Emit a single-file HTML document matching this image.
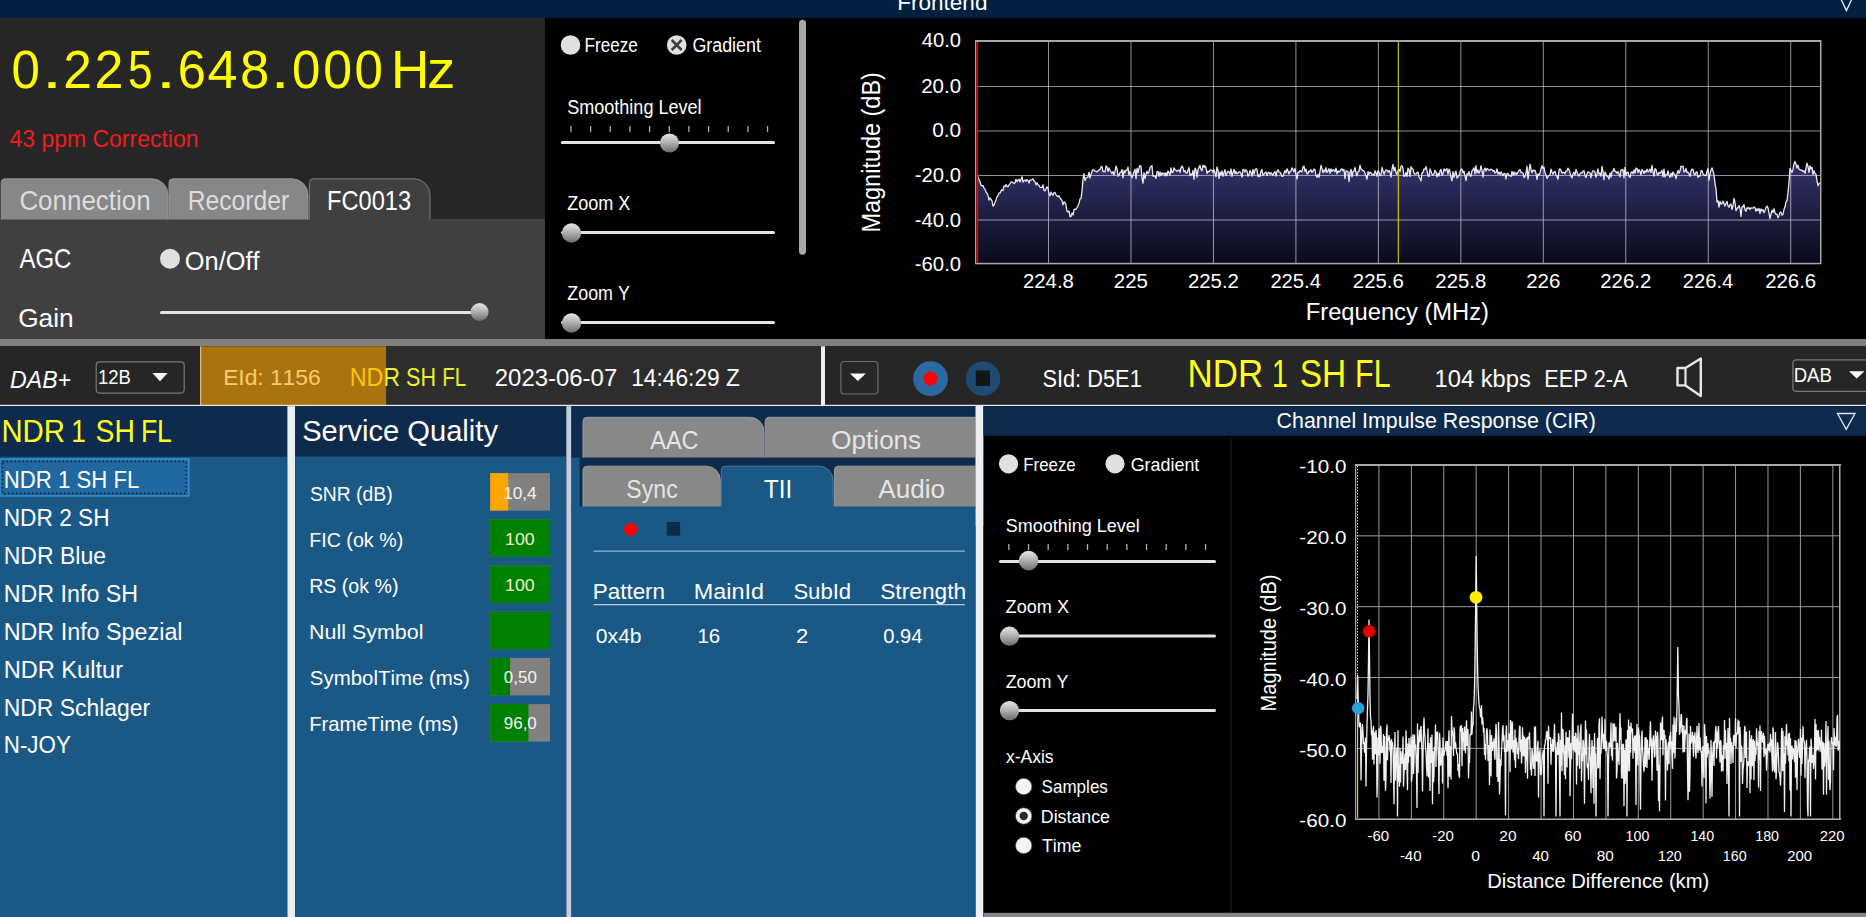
<!DOCTYPE html>
<html><head><meta charset="utf-8"><title>welle.io</title>
<style>
html,body{margin:0;padding:0;background:#000;overflow:hidden;width:1866px;height:917px}
svg{display:block;font-family:"Liberation Sans",sans-serif;font-kerning:none}
text{font-kerning:none}
</style></head><body>
<svg width="1866" height="917" viewBox="0 0 1866 917">
<defs>
<linearGradient id="thumbg" x1="0" y1="0" x2="0" y2="1">
  <stop offset="0" stop-color="#e6e6e6"/>
  <stop offset="0.45" stop-color="#b4b4b4"/>
  <stop offset="1" stop-color="#6c6c6c"/>
</linearGradient>
<linearGradient id="specg" x1="0" y1="160" x2="0" y2="264" gradientUnits="userSpaceOnUse">
  <stop offset="0" stop-color="#34346e"/>
  <stop offset="1" stop-color="#0a0a1a"/>
</linearGradient>
</defs>
<rect x="0.00" y="0.00" width="1866.00" height="18.00" fill="#02203f" />
<text x="897.15" y="10.00" font-size="22.82" textLength="90.31" lengthAdjust="spacingAndGlyphs" fill="#ffffff" >Frontend</text>
<path d="M1840,-3 L1852.8,-3 L1846.4,10.6 Z" fill="none" stroke="#d8e4f0" stroke-width="1.4" />
<rect x="0.00" y="18.00" width="545.00" height="321.00" fill="#262626" />
<text x="11.61" y="88.10" font-size="54.50" textLength="28.39" lengthAdjust="spacingAndGlyphs" fill="#ffff00" >0</text>
<text x="41.69" y="88.10" font-size="54.50" textLength="20.43" lengthAdjust="spacingAndGlyphs" fill="#ffff00" >.</text>
<text x="63.22" y="88.10" font-size="54.50" textLength="28.57" lengthAdjust="spacingAndGlyphs" fill="#ffff00" >2</text>
<text x="94.58" y="88.10" font-size="54.50" textLength="28.93" lengthAdjust="spacingAndGlyphs" fill="#ffff00" >2</text>
<text x="127.99" y="88.10" font-size="54.50" textLength="24.52" lengthAdjust="spacingAndGlyphs" fill="#ffff00" >5</text>
<text x="155.79" y="88.10" font-size="54.50" textLength="20.43" lengthAdjust="spacingAndGlyphs" fill="#ffff00" >.</text>
<text x="177.74" y="88.10" font-size="54.50" textLength="28.08" lengthAdjust="spacingAndGlyphs" fill="#ffff00" >6</text>
<text x="207.56" y="88.10" font-size="54.50" textLength="30.02" lengthAdjust="spacingAndGlyphs" fill="#ffff00" >4</text>
<text x="240.01" y="88.10" font-size="54.50" textLength="29.28" lengthAdjust="spacingAndGlyphs" fill="#ffff00" >8</text>
<text x="270.47" y="88.10" font-size="54.50" textLength="19.26" lengthAdjust="spacingAndGlyphs" fill="#ffff00" >.</text>
<text x="291.91" y="88.10" font-size="54.50" textLength="28.39" lengthAdjust="spacingAndGlyphs" fill="#ffff00" >0</text>
<text x="323.17" y="88.10" font-size="54.50" textLength="28.85" lengthAdjust="spacingAndGlyphs" fill="#ffff00" >0</text>
<text x="354.61" y="88.10" font-size="54.50" textLength="28.39" lengthAdjust="spacingAndGlyphs" fill="#ffff00" >0</text>
<text x="390.94" y="88.10" font-size="54.50" textLength="38.40" lengthAdjust="spacingAndGlyphs" fill="#ffff00" >H</text>
<text x="427.00" y="88.10" font-size="54.50" textLength="28.32" lengthAdjust="spacingAndGlyphs" fill="#ffff00" >z</text>
<text x="9.47" y="147.00" font-size="23.84" textLength="189.02" lengthAdjust="spacingAndGlyphs" fill="#f01c1c" >43 ppm Correction</text>
<rect x="0.00" y="219.00" width="545.00" height="120.00" fill="#404040" />
<path d="M1.2,219.5 L1.2,182.8 A4,4 0 0 1 5.2,178.8 L152,178.8 A16,16 0 0 1 168,194.8 L168,219.5 Z" fill="#878787" stroke="none" stroke-width="1" />
<path d="M1.2,219.5 L1.2,182.8 A4,4 0 0 1 5.2,178.8 L152,178.8 A16,16 0 0 1 168,194.8 L168,219.5" fill="none" stroke="#959595" stroke-width="1" />
<path d="M169,219.5 L169,182.8 A4,4 0 0 1 173,178.8 L292,178.8 A16,16 0 0 1 308,194.8 L308,219.5 Z" fill="#878787" stroke="none" stroke-width="1" />
<path d="M169,219.5 L169,182.8 A4,4 0 0 1 173,178.8 L292,178.8 A16,16 0 0 1 308,194.8 L308,219.5" fill="none" stroke="#959595" stroke-width="1" />
<path d="M309.4,219.5 L309.4,182.8 A4,4 0 0 1 313.4,178.8 L414,178.8 A16,16 0 0 1 430,194.8 L430,219.5 Z" fill="#404040" stroke="none" stroke-width="1" />
<path d="M309.4,219.5 L309.4,182.8 A4,4 0 0 1 313.4,178.8 L414,178.8 A16,16 0 0 1 430,194.8 L430,219.5" fill="none" stroke="#7c7c7c" stroke-width="1" />
<text x="19.38" y="210.00" font-size="27.03" textLength="131.30" lengthAdjust="spacingAndGlyphs" fill="#dcdcdc" >Connection</text>
<text x="187.78" y="210.00" font-size="27.03" textLength="101.43" lengthAdjust="spacingAndGlyphs" fill="#dcdcdc" >Recorder</text>
<text x="327.06" y="210.00" font-size="27.03" textLength="83.97" lengthAdjust="spacingAndGlyphs" fill="#ffffff" >FC0013</text>
<text x="19.45" y="268.00" font-size="26.89" textLength="51.96" lengthAdjust="spacingAndGlyphs" fill="#ffffff" >AGC</text>
<circle cx="170.00" cy="258.80" r="10.00" fill="#e0e0e0" />
<text x="184.80" y="270.00" font-size="25.44" textLength="74.77" lengthAdjust="spacingAndGlyphs" fill="#ffffff" >On/Off</text>
<text x="18.18" y="326.60" font-size="26.16" textLength="55.53" lengthAdjust="spacingAndGlyphs" fill="#ffffff" >Gain</text>
<rect x="160.00" y="311.00" width="312.00" height="3.00" fill="#e4e4e4" rx="1.5"/>
<circle cx="479.60" cy="312.00" r="9.00" fill="url(#thumbg)" />
<rect x="545.00" y="18.00" width="1321.00" height="321.00" fill="#000000" />
<circle cx="570.50" cy="45.00" r="9.80" fill="#e0e0e0" />
<text x="584.60" y="52.00" font-size="19.33" textLength="53.16" lengthAdjust="spacingAndGlyphs" fill="#ffffff" >Freeze</text>
<circle cx="676.70" cy="45.00" r="9.80" fill="#e0e0e0" />
<path d="M671.7,40 L681.7,50 M681.7,40 L671.7,50" fill="none" stroke="#404040" stroke-width="2.6" />
<text x="692.40" y="52.00" font-size="19.33" textLength="68.53" lengthAdjust="spacingAndGlyphs" fill="#ffffff" >Gradient</text>
<text x="567.18" y="114.30" font-size="19.77" textLength="134.43" lengthAdjust="spacingAndGlyphs" fill="#ffffff" >Smoothing Level</text>
<rect x="570.30" y="126.00" width="1.30" height="6.00" fill="#b0b0b0" />
<rect x="589.96" y="126.00" width="1.30" height="6.00" fill="#b0b0b0" />
<rect x="609.62" y="126.00" width="1.30" height="6.00" fill="#b0b0b0" />
<rect x="629.28" y="126.00" width="1.30" height="6.00" fill="#b0b0b0" />
<rect x="648.94" y="126.00" width="1.30" height="6.00" fill="#b0b0b0" />
<rect x="668.60" y="126.00" width="1.30" height="6.00" fill="#b0b0b0" />
<rect x="688.26" y="126.00" width="1.30" height="6.00" fill="#b0b0b0" />
<rect x="707.92" y="126.00" width="1.30" height="6.00" fill="#b0b0b0" />
<rect x="727.58" y="126.00" width="1.30" height="6.00" fill="#b0b0b0" />
<rect x="747.24" y="126.00" width="1.30" height="6.00" fill="#b0b0b0" />
<rect x="766.90" y="126.00" width="1.30" height="6.00" fill="#b0b0b0" />
<rect x="560.80" y="141.00" width="214.20" height="3.00" fill="#e4e4e4" rx="1.5"/>
<circle cx="669.50" cy="143.00" r="9.60" fill="url(#thumbg)" />
<text x="567.33" y="209.70" font-size="19.33" textLength="63.05" lengthAdjust="spacingAndGlyphs" fill="#ffffff" >Zoom X</text>
<rect x="561.00" y="231.00" width="214.00" height="3.00" fill="#e4e4e4" rx="1.5"/>
<circle cx="571.50" cy="233.00" r="9.70" fill="url(#thumbg)" />
<text x="567.33" y="299.70" font-size="19.33" textLength="62.46" lengthAdjust="spacingAndGlyphs" fill="#ffffff" >Zoom Y</text>
<rect x="561.00" y="321.00" width="214.00" height="3.00" fill="#e4e4e4" rx="1.5"/>
<circle cx="571.50" cy="323.00" r="9.70" fill="url(#thumbg)" />
<rect x="799.00" y="19.80" width="7.00" height="235.00" fill="#a8a8a8" rx="3.5"/>
<polygon points="977.0,263.3 977.0,175.9 978.0,176.7 979.0,179.6 980.0,181.9 981.0,185.0 982.0,186.0 983.0,185.5 984.0,188.1 985.0,189.2 986.0,191.9 987.0,193.4 988.0,195.3 989.0,200.0 990.0,197.9 991.0,199.3 992.0,200.9 993.0,206.1 994.0,205.3 995.0,202.4 996.0,199.9 997.0,196.8 998.0,195.5 999.0,193.0 1000.0,193.2 1001.0,191.0 1002.0,189.7 1003.0,190.5 1004.0,186.0 1005.0,186.3 1006.0,184.6 1007.0,186.6 1008.0,186.5 1009.0,185.1 1010.0,183.7 1011.0,182.0 1012.0,182.0 1013.0,182.8 1014.0,183.6 1015.0,182.7 1016.0,179.3 1017.0,181.7 1018.0,180.1 1019.0,179.2 1020.0,181.9 1021.0,179.6 1022.0,176.7 1023.0,182.1 1024.0,180.5 1025.0,180.0 1026.0,181.3 1027.0,179.6 1028.0,180.4 1029.0,183.1 1030.0,180.0 1031.0,179.9 1032.0,179.6 1033.0,178.9 1034.0,180.8 1035.0,181.8 1036.0,184.9 1037.0,182.7 1038.0,184.8 1039.0,185.4 1040.0,187.3 1041.0,187.6 1042.0,187.4 1043.0,184.8 1044.0,190.3 1045.0,190.8 1046.0,188.7 1047.0,186.8 1048.0,188.4 1049.0,193.4 1050.0,195.9 1051.0,192.2 1052.0,193.8 1053.0,195.3 1054.0,192.6 1055.0,192.4 1056.0,194.8 1057.0,196.0 1058.0,196.7 1059.0,195.7 1060.0,197.9 1061.0,199.3 1062.0,200.4 1063.0,204.9 1064.0,201.9 1065.0,202.6 1066.0,205.1 1067.0,211.3 1068.0,211.8 1069.0,210.9 1070.0,216.7 1071.0,216.6 1072.0,212.9 1073.0,215.1 1074.0,209.6 1075.0,209.2 1076.0,209.3 1077.0,207.5 1078.0,205.6 1079.0,203.4 1080.0,198.8 1081.0,198.6 1082.0,190.9 1083.0,179.4 1084.0,173.7 1085.0,180.7 1086.0,178.0 1087.0,177.5 1088.0,176.8 1089.0,172.2 1090.0,178.2 1091.0,174.2 1092.0,171.1 1093.0,169.5 1094.0,170.2 1095.0,171.2 1096.0,171.4 1097.0,171.9 1098.0,171.1 1099.0,170.0 1100.0,169.4 1101.0,166.9 1102.0,166.5 1103.0,171.8 1104.0,171.4 1105.0,172.0 1106.0,166.0 1107.0,166.9 1108.0,171.7 1109.0,167.9 1110.0,170.2 1111.0,172.0 1112.0,173.8 1113.0,171.5 1114.0,175.2 1115.0,171.3 1116.0,166.1 1117.0,168.5 1118.0,176.2 1119.0,175.3 1120.0,172.6 1121.0,172.2 1122.0,169.4 1123.0,177.8 1124.0,170.5 1125.0,172.7 1126.0,170.2 1127.0,170.1 1128.0,167.2 1129.0,175.0 1130.0,171.7 1131.0,175.1 1132.0,177.9 1133.0,174.7 1134.0,171.9 1135.0,169.1 1136.0,178.7 1137.0,168.4 1138.0,172.5 1139.0,168.0 1140.0,165.5 1141.0,166.5 1142.0,178.1 1143.0,183.2 1144.0,172.6 1145.0,178.7 1146.0,174.2 1147.0,171.2 1148.0,173.4 1149.0,171.7 1150.0,167.6 1151.0,166.3 1152.0,165.7 1153.0,176.1 1154.0,175.8 1155.0,176.2 1156.0,178.4 1157.0,171.7 1158.0,171.4 1159.0,176.4 1160.0,171.8 1161.0,175.5 1162.0,172.8 1163.0,174.0 1164.0,172.9 1165.0,175.8 1166.0,172.7 1167.0,175.7 1168.0,171.0 1169.0,172.7 1170.0,175.0 1171.0,167.9 1172.0,172.6 1173.0,172.1 1174.0,167.9 1175.0,169.9 1176.0,170.1 1177.0,171.3 1178.0,170.4 1179.0,170.0 1180.0,172.4 1181.0,167.9 1182.0,166.0 1183.0,167.6 1184.0,171.8 1185.0,170.8 1186.0,173.1 1187.0,173.0 1188.0,170.3 1189.0,167.6 1190.0,175.6 1191.0,174.0 1192.0,174.7 1193.0,170.4 1194.0,179.3 1195.0,168.1 1196.0,169.7 1197.0,177.2 1198.0,169.7 1199.0,167.3 1200.0,165.4 1201.0,169.6 1202.0,170.7 1203.0,165.1 1204.0,167.3 1205.0,165.7 1206.0,167.5 1207.0,173.5 1208.0,171.3 1209.0,171.8 1210.0,170.2 1211.0,170.0 1212.0,170.3 1213.0,172.4 1214.0,169.5 1215.0,173.2 1216.0,176.8 1217.0,166.9 1218.0,170.3 1219.0,178.4 1220.0,172.0 1221.0,175.0 1222.0,171.0 1223.0,176.2 1224.0,172.8 1225.0,169.6 1226.0,175.5 1227.0,173.1 1228.0,171.2 1229.0,171.8 1230.0,174.1 1231.0,168.9 1232.0,176.3 1233.0,172.6 1234.0,169.4 1235.0,173.5 1236.0,171.4 1237.0,173.9 1238.0,172.9 1239.0,172.1 1240.0,171.7 1241.0,173.8 1242.0,177.1 1243.0,169.3 1244.0,169.7 1245.0,172.1 1246.0,169.8 1247.0,171.4 1248.0,176.1 1249.0,174.7 1250.0,170.7 1251.0,172.3 1252.0,176.2 1253.0,169.4 1254.0,174.0 1255.0,169.9 1256.0,168.6 1257.0,169.3 1258.0,176.6 1259.0,174.7 1260.0,176.6 1261.0,170.9 1262.0,169.5 1263.0,175.3 1264.0,174.1 1265.0,172.5 1266.0,172.0 1267.0,175.6 1268.0,172.7 1269.0,172.2 1270.0,174.2 1271.0,172.6 1272.0,174.0 1273.0,175.3 1274.0,172.4 1275.0,171.5 1276.0,176.0 1277.0,171.3 1278.0,169.9 1279.0,171.9 1280.0,172.1 1281.0,174.1 1282.0,176.4 1283.0,176.2 1284.0,173.1 1285.0,170.6 1286.0,172.9 1287.0,168.8 1288.0,170.9 1289.0,174.0 1290.0,171.6 1291.0,170.9 1292.0,167.8 1293.0,169.6 1294.0,171.9 1295.0,168.4 1296.0,174.3 1297.0,179.2 1298.0,172.1 1299.0,172.5 1300.0,170.5 1301.0,171.5 1302.0,172.0 1303.0,166.9 1304.0,166.2 1305.0,171.5 1306.0,169.0 1307.0,173.8 1308.0,173.8 1309.0,171.0 1310.0,171.3 1311.0,169.7 1312.0,172.4 1313.0,171.0 1314.0,169.0 1315.0,169.8 1316.0,175.5 1317.0,177.2 1318.0,174.5 1319.0,177.3 1320.0,171.5 1321.0,165.3 1322.0,168.6 1323.0,172.7 1324.0,170.0 1325.0,171.9 1326.0,167.6 1327.0,172.5 1328.0,171.0 1329.0,168.8 1330.0,173.3 1331.0,169.0 1332.0,171.5 1333.0,169.6 1334.0,170.0 1335.0,171.8 1336.0,168.1 1337.0,173.9 1338.0,170.8 1339.0,172.3 1340.0,171.2 1341.0,169.3 1342.0,168.9 1343.0,170.9 1344.0,169.5 1345.0,178.6 1346.0,170.8 1347.0,171.0 1348.0,171.7 1349.0,181.5 1350.0,172.1 1351.0,169.3 1352.0,176.8 1353.0,171.6 1354.0,170.9 1355.0,167.3 1356.0,172.8 1357.0,175.9 1358.0,171.8 1359.0,171.3 1360.0,165.2 1361.0,169.1 1362.0,169.8 1363.0,170.7 1364.0,171.1 1365.0,173.5 1366.0,176.0 1367.0,179.2 1368.0,171.6 1369.0,174.2 1370.0,172.2 1371.0,172.8 1372.0,174.7 1373.0,174.1 1374.0,175.3 1375.0,170.8 1376.0,172.8 1377.0,176.3 1378.0,170.7 1379.0,172.1 1380.0,175.7 1381.0,174.9 1382.0,167.5 1383.0,171.0 1384.0,174.4 1385.0,171.7 1386.0,170.1 1387.0,170.1 1388.0,172.3 1389.0,170.5 1390.0,172.1 1391.0,177.2 1392.0,169.1 1393.0,164.5 1394.0,170.7 1395.0,167.3 1396.0,173.1 1397.0,174.4 1398.0,170.6 1399.0,169.4 1400.0,171.5 1401.0,166.5 1402.0,165.6 1403.0,168.4 1404.0,176.4 1405.0,175.9 1406.0,172.4 1407.0,176.4 1408.0,168.2 1409.0,169.4 1410.0,176.4 1411.0,166.7 1412.0,168.5 1413.0,169.2 1414.0,173.2 1415.0,174.1 1416.0,174.1 1417.0,172.6 1418.0,172.0 1419.0,177.0 1420.0,178.5 1421.0,180.9 1422.0,172.8 1423.0,172.3 1424.0,169.0 1425.0,169.3 1426.0,166.7 1427.0,170.5 1428.0,175.9 1429.0,176.4 1430.0,169.0 1431.0,171.5 1432.0,174.4 1433.0,175.2 1434.0,173.7 1435.0,170.2 1436.0,172.0 1437.0,176.9 1438.0,173.1 1439.0,176.0 1440.0,170.9 1441.0,169.4 1442.0,175.3 1443.0,173.9 1444.0,168.8 1445.0,170.8 1446.0,169.8 1447.0,168.8 1448.0,174.2 1449.0,169.1 1450.0,171.8 1451.0,177.4 1452.0,180.9 1453.0,171.6 1454.0,177.4 1455.0,173.7 1456.0,171.1 1457.0,178.1 1458.0,176.9 1459.0,175.4 1460.0,172.2 1461.0,169.1 1462.0,169.1 1463.0,172.8 1464.0,171.2 1465.0,175.6 1466.0,180.7 1467.0,173.8 1468.0,174.3 1469.0,171.6 1470.0,175.8 1471.0,176.0 1472.0,170.7 1473.0,169.6 1474.0,167.8 1475.0,174.0 1476.0,165.7 1477.0,172.9 1478.0,170.0 1479.0,173.2 1480.0,171.0 1481.0,165.6 1482.0,170.7 1483.0,177.2 1484.0,169.8 1485.0,168.0 1486.0,171.1 1487.0,168.5 1488.0,169.3 1489.0,170.2 1490.0,170.0 1491.0,169.1 1492.0,169.5 1493.0,171.3 1494.0,170.6 1495.0,173.0 1496.0,172.4 1497.0,168.9 1498.0,174.0 1499.0,172.2 1500.0,174.4 1501.0,171.9 1502.0,173.9 1503.0,175.6 1504.0,173.4 1505.0,173.6 1506.0,179.0 1507.0,173.7 1508.0,173.5 1509.0,175.7 1510.0,175.3 1511.0,176.5 1512.0,171.3 1513.0,175.2 1514.0,171.9 1515.0,174.5 1516.0,172.7 1517.0,174.3 1518.0,172.3 1519.0,170.2 1520.0,169.6 1521.0,172.7 1522.0,172.5 1523.0,173.0 1524.0,177.7 1525.0,176.4 1526.0,173.3 1527.0,166.3 1528.0,179.1 1529.0,170.8 1530.0,164.1 1531.0,169.2 1532.0,172.7 1533.0,169.9 1534.0,170.8 1535.0,170.2 1536.0,173.5 1537.0,179.4 1538.0,173.9 1539.0,175.4 1540.0,173.1 1541.0,168.8 1542.0,165.7 1543.0,168.5 1544.0,167.1 1545.0,173.2 1546.0,174.8 1547.0,178.4 1548.0,176.7 1549.0,175.4 1550.0,175.2 1551.0,169.1 1552.0,172.0 1553.0,174.1 1554.0,172.1 1555.0,171.4 1556.0,174.4 1557.0,176.7 1558.0,179.2 1559.0,170.6 1560.0,168.8 1561.0,170.5 1562.0,173.1 1563.0,172.4 1564.0,172.4 1565.0,173.8 1566.0,171.1 1567.0,171.0 1568.0,168.2 1569.0,169.6 1570.0,172.8 1571.0,176.5 1572.0,178.0 1573.0,173.7 1574.0,172.3 1575.0,175.0 1576.0,169.5 1577.0,172.2 1578.0,174.7 1579.0,176.0 1580.0,173.8 1581.0,172.7 1582.0,173.0 1583.0,171.4 1584.0,170.7 1585.0,175.7 1586.0,177.5 1587.0,173.8 1588.0,171.9 1589.0,172.5 1590.0,172.9 1591.0,177.5 1592.0,172.5 1593.0,170.8 1594.0,170.9 1595.0,172.2 1596.0,177.2 1597.0,173.9 1598.0,169.0 1599.0,174.2 1600.0,173.2 1601.0,176.2 1602.0,166.3 1603.0,171.6 1604.0,179.6 1605.0,172.0 1606.0,174.3 1607.0,176.1 1608.0,176.7 1609.0,179.1 1610.0,172.8 1611.0,177.1 1612.0,171.6 1613.0,171.4 1614.0,168.3 1615.0,171.3 1616.0,171.8 1617.0,173.4 1618.0,171.4 1619.0,173.9 1620.0,176.9 1621.0,169.8 1622.0,170.4 1623.0,169.5 1624.0,177.8 1625.0,167.4 1626.0,175.3 1627.0,172.6 1628.0,172.1 1629.0,176.3 1630.0,177.6 1631.0,172.5 1632.0,171.8 1633.0,173.8 1634.0,170.0 1635.0,173.1 1636.0,168.1 1637.0,168.3 1638.0,172.6 1639.0,169.6 1640.0,171.4 1641.0,175.1 1642.0,169.3 1643.0,171.1 1644.0,173.4 1645.0,170.8 1646.0,172.3 1647.0,169.1 1648.0,171.9 1649.0,171.1 1650.0,169.1 1651.0,172.5 1652.0,165.4 1653.0,172.3 1654.0,176.0 1655.0,168.7 1656.0,169.3 1657.0,174.0 1658.0,175.0 1659.0,172.2 1660.0,173.4 1661.0,172.2 1662.0,170.3 1663.0,176.8 1664.0,169.2 1665.0,177.0 1666.0,174.6 1667.0,174.6 1668.0,170.9 1669.0,175.0 1670.0,177.4 1671.0,173.1 1672.0,176.7 1673.0,171.9 1674.0,174.0 1675.0,174.7 1676.0,178.7 1677.0,173.9 1678.0,170.3 1679.0,173.2 1680.0,171.1 1681.0,166.2 1682.0,166.8 1683.0,166.2 1684.0,172.0 1685.0,171.2 1686.0,168.4 1687.0,172.5 1688.0,172.2 1689.0,173.9 1690.0,176.3 1691.0,170.9 1692.0,169.2 1693.0,169.4 1694.0,173.8 1695.0,174.9 1696.0,172.2 1697.0,172.0 1698.0,177.3 1699.0,175.8 1700.0,176.0 1701.0,170.9 1702.0,170.6 1703.0,173.9 1704.0,174.7 1705.0,175.4 1706.0,175.5 1707.0,171.5 1708.0,168.5 1709.0,180.1 1710.0,173.8 1711.0,170.2 1712.0,167.8 1713.0,171.0 1714.0,174.4 1715.0,183.6 1716.0,188.9 1717.0,202.0 1718.0,200.8 1719.0,207.1 1720.0,201.3 1721.0,204.1 1722.0,203.4 1723.0,201.1 1724.0,203.6 1725.0,206.0 1726.0,203.3 1727.0,201.4 1728.0,205.9 1729.0,207.2 1730.0,204.7 1731.0,204.0 1732.0,209.5 1733.0,205.6 1734.0,198.3 1735.0,202.4 1736.0,210.6 1737.0,208.8 1738.0,207.5 1739.0,205.5 1740.0,208.5 1741.0,216.4 1742.0,206.6 1743.0,207.0 1744.0,204.6 1745.0,209.7 1746.0,211.3 1747.0,207.7 1748.0,208.5 1749.0,207.6 1750.0,209.5 1751.0,207.9 1752.0,208.1 1753.0,208.2 1754.0,207.0 1755.0,207.7 1756.0,211.2 1757.0,208.7 1758.0,210.6 1759.0,208.4 1760.0,213.3 1761.0,208.9 1762.0,210.9 1763.0,209.8 1764.0,212.7 1765.0,210.4 1766.0,207.6 1767.0,206.1 1768.0,207.8 1769.0,213.2 1770.0,218.6 1771.0,214.0 1772.0,210.2 1773.0,212.5 1774.0,208.6 1775.0,212.9 1776.0,214.3 1777.0,214.2 1778.0,217.8 1779.0,215.7 1780.0,212.1 1781.0,212.1 1782.0,215.4 1783.0,214.3 1784.0,209.3 1785.0,207.1 1786.0,201.9 1787.0,200.5 1788.0,192.6 1789.0,182.0 1790.0,168.3 1791.0,170.7 1792.0,172.4 1793.0,169.4 1794.0,163.7 1795.0,161.5 1796.0,164.5 1797.0,168.1 1798.0,165.1 1799.0,169.4 1800.0,169.5 1801.0,170.3 1802.0,170.2 1803.0,171.5 1804.0,170.9 1805.0,173.3 1806.0,167.8 1807.0,163.2 1808.0,166.4 1809.0,172.3 1810.0,165.8 1811.0,169.0 1812.0,167.2 1813.0,174.3 1814.0,170.7 1815.0,173.4 1816.0,174.3 1817.0,180.9 1818.0,185.6 1819.0,183.6 1820.0,183.0 1820.0,263.3" fill="url(#specg)"/>
<line x1="975.50" y1="86.50" x2="1820.80" y2="86.50" stroke="rgba(200,200,215,0.72)" stroke-width="1" />
<line x1="975.50" y1="131.00" x2="1820.80" y2="131.00" stroke="rgba(200,200,215,0.72)" stroke-width="1" />
<line x1="975.50" y1="175.50" x2="1820.80" y2="175.50" stroke="rgba(200,200,215,0.72)" stroke-width="1" />
<line x1="975.50" y1="220.00" x2="1820.80" y2="220.00" stroke="rgba(200,200,215,0.72)" stroke-width="1" />
<line x1="1048.50" y1="41.00" x2="1048.50" y2="263.30" stroke="rgba(200,200,215,0.72)" stroke-width="1" />
<line x1="1130.97" y1="41.00" x2="1130.97" y2="263.30" stroke="rgba(200,200,215,0.72)" stroke-width="1" />
<line x1="1213.44" y1="41.00" x2="1213.44" y2="263.30" stroke="rgba(200,200,215,0.72)" stroke-width="1" />
<line x1="1295.91" y1="41.00" x2="1295.91" y2="263.30" stroke="rgba(200,200,215,0.72)" stroke-width="1" />
<line x1="1378.38" y1="41.00" x2="1378.38" y2="263.30" stroke="rgba(200,200,215,0.72)" stroke-width="1" />
<line x1="1460.85" y1="41.00" x2="1460.85" y2="263.30" stroke="rgba(200,200,215,0.72)" stroke-width="1" />
<line x1="1543.32" y1="41.00" x2="1543.32" y2="263.30" stroke="rgba(200,200,215,0.72)" stroke-width="1" />
<line x1="1625.79" y1="41.00" x2="1625.79" y2="263.30" stroke="rgba(200,200,215,0.72)" stroke-width="1" />
<line x1="1708.26" y1="41.00" x2="1708.26" y2="263.30" stroke="rgba(200,200,215,0.72)" stroke-width="1" />
<line x1="1790.73" y1="41.00" x2="1790.73" y2="263.30" stroke="rgba(200,200,215,0.72)" stroke-width="1" />
<polyline points="977.0,175.9 978.0,176.7 979.0,179.6 980.0,181.9 981.0,185.0 982.0,186.0 983.0,185.5 984.0,188.1 985.0,189.2 986.0,191.9 987.0,193.4 988.0,195.3 989.0,200.0 990.0,197.9 991.0,199.3 992.0,200.9 993.0,206.1 994.0,205.3 995.0,202.4 996.0,199.9 997.0,196.8 998.0,195.5 999.0,193.0 1000.0,193.2 1001.0,191.0 1002.0,189.7 1003.0,190.5 1004.0,186.0 1005.0,186.3 1006.0,184.6 1007.0,186.6 1008.0,186.5 1009.0,185.1 1010.0,183.7 1011.0,182.0 1012.0,182.0 1013.0,182.8 1014.0,183.6 1015.0,182.7 1016.0,179.3 1017.0,181.7 1018.0,180.1 1019.0,179.2 1020.0,181.9 1021.0,179.6 1022.0,176.7 1023.0,182.1 1024.0,180.5 1025.0,180.0 1026.0,181.3 1027.0,179.6 1028.0,180.4 1029.0,183.1 1030.0,180.0 1031.0,179.9 1032.0,179.6 1033.0,178.9 1034.0,180.8 1035.0,181.8 1036.0,184.9 1037.0,182.7 1038.0,184.8 1039.0,185.4 1040.0,187.3 1041.0,187.6 1042.0,187.4 1043.0,184.8 1044.0,190.3 1045.0,190.8 1046.0,188.7 1047.0,186.8 1048.0,188.4 1049.0,193.4 1050.0,195.9 1051.0,192.2 1052.0,193.8 1053.0,195.3 1054.0,192.6 1055.0,192.4 1056.0,194.8 1057.0,196.0 1058.0,196.7 1059.0,195.7 1060.0,197.9 1061.0,199.3 1062.0,200.4 1063.0,204.9 1064.0,201.9 1065.0,202.6 1066.0,205.1 1067.0,211.3 1068.0,211.8 1069.0,210.9 1070.0,216.7 1071.0,216.6 1072.0,212.9 1073.0,215.1 1074.0,209.6 1075.0,209.2 1076.0,209.3 1077.0,207.5 1078.0,205.6 1079.0,203.4 1080.0,198.8 1081.0,198.6 1082.0,190.9 1083.0,179.4 1084.0,173.7 1085.0,180.7 1086.0,178.0 1087.0,177.5 1088.0,176.8 1089.0,172.2 1090.0,178.2 1091.0,174.2 1092.0,171.1 1093.0,169.5 1094.0,170.2 1095.0,171.2 1096.0,171.4 1097.0,171.9 1098.0,171.1 1099.0,170.0 1100.0,169.4 1101.0,166.9 1102.0,166.5 1103.0,171.8 1104.0,171.4 1105.0,172.0 1106.0,166.0 1107.0,166.9 1108.0,171.7 1109.0,167.9 1110.0,170.2 1111.0,172.0 1112.0,173.8 1113.0,171.5 1114.0,175.2 1115.0,171.3 1116.0,166.1 1117.0,168.5 1118.0,176.2 1119.0,175.3 1120.0,172.6 1121.0,172.2 1122.0,169.4 1123.0,177.8 1124.0,170.5 1125.0,172.7 1126.0,170.2 1127.0,170.1 1128.0,167.2 1129.0,175.0 1130.0,171.7 1131.0,175.1 1132.0,177.9 1133.0,174.7 1134.0,171.9 1135.0,169.1 1136.0,178.7 1137.0,168.4 1138.0,172.5 1139.0,168.0 1140.0,165.5 1141.0,166.5 1142.0,178.1 1143.0,183.2 1144.0,172.6 1145.0,178.7 1146.0,174.2 1147.0,171.2 1148.0,173.4 1149.0,171.7 1150.0,167.6 1151.0,166.3 1152.0,165.7 1153.0,176.1 1154.0,175.8 1155.0,176.2 1156.0,178.4 1157.0,171.7 1158.0,171.4 1159.0,176.4 1160.0,171.8 1161.0,175.5 1162.0,172.8 1163.0,174.0 1164.0,172.9 1165.0,175.8 1166.0,172.7 1167.0,175.7 1168.0,171.0 1169.0,172.7 1170.0,175.0 1171.0,167.9 1172.0,172.6 1173.0,172.1 1174.0,167.9 1175.0,169.9 1176.0,170.1 1177.0,171.3 1178.0,170.4 1179.0,170.0 1180.0,172.4 1181.0,167.9 1182.0,166.0 1183.0,167.6 1184.0,171.8 1185.0,170.8 1186.0,173.1 1187.0,173.0 1188.0,170.3 1189.0,167.6 1190.0,175.6 1191.0,174.0 1192.0,174.7 1193.0,170.4 1194.0,179.3 1195.0,168.1 1196.0,169.7 1197.0,177.2 1198.0,169.7 1199.0,167.3 1200.0,165.4 1201.0,169.6 1202.0,170.7 1203.0,165.1 1204.0,167.3 1205.0,165.7 1206.0,167.5 1207.0,173.5 1208.0,171.3 1209.0,171.8 1210.0,170.2 1211.0,170.0 1212.0,170.3 1213.0,172.4 1214.0,169.5 1215.0,173.2 1216.0,176.8 1217.0,166.9 1218.0,170.3 1219.0,178.4 1220.0,172.0 1221.0,175.0 1222.0,171.0 1223.0,176.2 1224.0,172.8 1225.0,169.6 1226.0,175.5 1227.0,173.1 1228.0,171.2 1229.0,171.8 1230.0,174.1 1231.0,168.9 1232.0,176.3 1233.0,172.6 1234.0,169.4 1235.0,173.5 1236.0,171.4 1237.0,173.9 1238.0,172.9 1239.0,172.1 1240.0,171.7 1241.0,173.8 1242.0,177.1 1243.0,169.3 1244.0,169.7 1245.0,172.1 1246.0,169.8 1247.0,171.4 1248.0,176.1 1249.0,174.7 1250.0,170.7 1251.0,172.3 1252.0,176.2 1253.0,169.4 1254.0,174.0 1255.0,169.9 1256.0,168.6 1257.0,169.3 1258.0,176.6 1259.0,174.7 1260.0,176.6 1261.0,170.9 1262.0,169.5 1263.0,175.3 1264.0,174.1 1265.0,172.5 1266.0,172.0 1267.0,175.6 1268.0,172.7 1269.0,172.2 1270.0,174.2 1271.0,172.6 1272.0,174.0 1273.0,175.3 1274.0,172.4 1275.0,171.5 1276.0,176.0 1277.0,171.3 1278.0,169.9 1279.0,171.9 1280.0,172.1 1281.0,174.1 1282.0,176.4 1283.0,176.2 1284.0,173.1 1285.0,170.6 1286.0,172.9 1287.0,168.8 1288.0,170.9 1289.0,174.0 1290.0,171.6 1291.0,170.9 1292.0,167.8 1293.0,169.6 1294.0,171.9 1295.0,168.4 1296.0,174.3 1297.0,179.2 1298.0,172.1 1299.0,172.5 1300.0,170.5 1301.0,171.5 1302.0,172.0 1303.0,166.9 1304.0,166.2 1305.0,171.5 1306.0,169.0 1307.0,173.8 1308.0,173.8 1309.0,171.0 1310.0,171.3 1311.0,169.7 1312.0,172.4 1313.0,171.0 1314.0,169.0 1315.0,169.8 1316.0,175.5 1317.0,177.2 1318.0,174.5 1319.0,177.3 1320.0,171.5 1321.0,165.3 1322.0,168.6 1323.0,172.7 1324.0,170.0 1325.0,171.9 1326.0,167.6 1327.0,172.5 1328.0,171.0 1329.0,168.8 1330.0,173.3 1331.0,169.0 1332.0,171.5 1333.0,169.6 1334.0,170.0 1335.0,171.8 1336.0,168.1 1337.0,173.9 1338.0,170.8 1339.0,172.3 1340.0,171.2 1341.0,169.3 1342.0,168.9 1343.0,170.9 1344.0,169.5 1345.0,178.6 1346.0,170.8 1347.0,171.0 1348.0,171.7 1349.0,181.5 1350.0,172.1 1351.0,169.3 1352.0,176.8 1353.0,171.6 1354.0,170.9 1355.0,167.3 1356.0,172.8 1357.0,175.9 1358.0,171.8 1359.0,171.3 1360.0,165.2 1361.0,169.1 1362.0,169.8 1363.0,170.7 1364.0,171.1 1365.0,173.5 1366.0,176.0 1367.0,179.2 1368.0,171.6 1369.0,174.2 1370.0,172.2 1371.0,172.8 1372.0,174.7 1373.0,174.1 1374.0,175.3 1375.0,170.8 1376.0,172.8 1377.0,176.3 1378.0,170.7 1379.0,172.1 1380.0,175.7 1381.0,174.9 1382.0,167.5 1383.0,171.0 1384.0,174.4 1385.0,171.7 1386.0,170.1 1387.0,170.1 1388.0,172.3 1389.0,170.5 1390.0,172.1 1391.0,177.2 1392.0,169.1 1393.0,164.5 1394.0,170.7 1395.0,167.3 1396.0,173.1 1397.0,174.4 1398.0,170.6 1399.0,169.4 1400.0,171.5 1401.0,166.5 1402.0,165.6 1403.0,168.4 1404.0,176.4 1405.0,175.9 1406.0,172.4 1407.0,176.4 1408.0,168.2 1409.0,169.4 1410.0,176.4 1411.0,166.7 1412.0,168.5 1413.0,169.2 1414.0,173.2 1415.0,174.1 1416.0,174.1 1417.0,172.6 1418.0,172.0 1419.0,177.0 1420.0,178.5 1421.0,180.9 1422.0,172.8 1423.0,172.3 1424.0,169.0 1425.0,169.3 1426.0,166.7 1427.0,170.5 1428.0,175.9 1429.0,176.4 1430.0,169.0 1431.0,171.5 1432.0,174.4 1433.0,175.2 1434.0,173.7 1435.0,170.2 1436.0,172.0 1437.0,176.9 1438.0,173.1 1439.0,176.0 1440.0,170.9 1441.0,169.4 1442.0,175.3 1443.0,173.9 1444.0,168.8 1445.0,170.8 1446.0,169.8 1447.0,168.8 1448.0,174.2 1449.0,169.1 1450.0,171.8 1451.0,177.4 1452.0,180.9 1453.0,171.6 1454.0,177.4 1455.0,173.7 1456.0,171.1 1457.0,178.1 1458.0,176.9 1459.0,175.4 1460.0,172.2 1461.0,169.1 1462.0,169.1 1463.0,172.8 1464.0,171.2 1465.0,175.6 1466.0,180.7 1467.0,173.8 1468.0,174.3 1469.0,171.6 1470.0,175.8 1471.0,176.0 1472.0,170.7 1473.0,169.6 1474.0,167.8 1475.0,174.0 1476.0,165.7 1477.0,172.9 1478.0,170.0 1479.0,173.2 1480.0,171.0 1481.0,165.6 1482.0,170.7 1483.0,177.2 1484.0,169.8 1485.0,168.0 1486.0,171.1 1487.0,168.5 1488.0,169.3 1489.0,170.2 1490.0,170.0 1491.0,169.1 1492.0,169.5 1493.0,171.3 1494.0,170.6 1495.0,173.0 1496.0,172.4 1497.0,168.9 1498.0,174.0 1499.0,172.2 1500.0,174.4 1501.0,171.9 1502.0,173.9 1503.0,175.6 1504.0,173.4 1505.0,173.6 1506.0,179.0 1507.0,173.7 1508.0,173.5 1509.0,175.7 1510.0,175.3 1511.0,176.5 1512.0,171.3 1513.0,175.2 1514.0,171.9 1515.0,174.5 1516.0,172.7 1517.0,174.3 1518.0,172.3 1519.0,170.2 1520.0,169.6 1521.0,172.7 1522.0,172.5 1523.0,173.0 1524.0,177.7 1525.0,176.4 1526.0,173.3 1527.0,166.3 1528.0,179.1 1529.0,170.8 1530.0,164.1 1531.0,169.2 1532.0,172.7 1533.0,169.9 1534.0,170.8 1535.0,170.2 1536.0,173.5 1537.0,179.4 1538.0,173.9 1539.0,175.4 1540.0,173.1 1541.0,168.8 1542.0,165.7 1543.0,168.5 1544.0,167.1 1545.0,173.2 1546.0,174.8 1547.0,178.4 1548.0,176.7 1549.0,175.4 1550.0,175.2 1551.0,169.1 1552.0,172.0 1553.0,174.1 1554.0,172.1 1555.0,171.4 1556.0,174.4 1557.0,176.7 1558.0,179.2 1559.0,170.6 1560.0,168.8 1561.0,170.5 1562.0,173.1 1563.0,172.4 1564.0,172.4 1565.0,173.8 1566.0,171.1 1567.0,171.0 1568.0,168.2 1569.0,169.6 1570.0,172.8 1571.0,176.5 1572.0,178.0 1573.0,173.7 1574.0,172.3 1575.0,175.0 1576.0,169.5 1577.0,172.2 1578.0,174.7 1579.0,176.0 1580.0,173.8 1581.0,172.7 1582.0,173.0 1583.0,171.4 1584.0,170.7 1585.0,175.7 1586.0,177.5 1587.0,173.8 1588.0,171.9 1589.0,172.5 1590.0,172.9 1591.0,177.5 1592.0,172.5 1593.0,170.8 1594.0,170.9 1595.0,172.2 1596.0,177.2 1597.0,173.9 1598.0,169.0 1599.0,174.2 1600.0,173.2 1601.0,176.2 1602.0,166.3 1603.0,171.6 1604.0,179.6 1605.0,172.0 1606.0,174.3 1607.0,176.1 1608.0,176.7 1609.0,179.1 1610.0,172.8 1611.0,177.1 1612.0,171.6 1613.0,171.4 1614.0,168.3 1615.0,171.3 1616.0,171.8 1617.0,173.4 1618.0,171.4 1619.0,173.9 1620.0,176.9 1621.0,169.8 1622.0,170.4 1623.0,169.5 1624.0,177.8 1625.0,167.4 1626.0,175.3 1627.0,172.6 1628.0,172.1 1629.0,176.3 1630.0,177.6 1631.0,172.5 1632.0,171.8 1633.0,173.8 1634.0,170.0 1635.0,173.1 1636.0,168.1 1637.0,168.3 1638.0,172.6 1639.0,169.6 1640.0,171.4 1641.0,175.1 1642.0,169.3 1643.0,171.1 1644.0,173.4 1645.0,170.8 1646.0,172.3 1647.0,169.1 1648.0,171.9 1649.0,171.1 1650.0,169.1 1651.0,172.5 1652.0,165.4 1653.0,172.3 1654.0,176.0 1655.0,168.7 1656.0,169.3 1657.0,174.0 1658.0,175.0 1659.0,172.2 1660.0,173.4 1661.0,172.2 1662.0,170.3 1663.0,176.8 1664.0,169.2 1665.0,177.0 1666.0,174.6 1667.0,174.6 1668.0,170.9 1669.0,175.0 1670.0,177.4 1671.0,173.1 1672.0,176.7 1673.0,171.9 1674.0,174.0 1675.0,174.7 1676.0,178.7 1677.0,173.9 1678.0,170.3 1679.0,173.2 1680.0,171.1 1681.0,166.2 1682.0,166.8 1683.0,166.2 1684.0,172.0 1685.0,171.2 1686.0,168.4 1687.0,172.5 1688.0,172.2 1689.0,173.9 1690.0,176.3 1691.0,170.9 1692.0,169.2 1693.0,169.4 1694.0,173.8 1695.0,174.9 1696.0,172.2 1697.0,172.0 1698.0,177.3 1699.0,175.8 1700.0,176.0 1701.0,170.9 1702.0,170.6 1703.0,173.9 1704.0,174.7 1705.0,175.4 1706.0,175.5 1707.0,171.5 1708.0,168.5 1709.0,180.1 1710.0,173.8 1711.0,170.2 1712.0,167.8 1713.0,171.0 1714.0,174.4 1715.0,183.6 1716.0,188.9 1717.0,202.0 1718.0,200.8 1719.0,207.1 1720.0,201.3 1721.0,204.1 1722.0,203.4 1723.0,201.1 1724.0,203.6 1725.0,206.0 1726.0,203.3 1727.0,201.4 1728.0,205.9 1729.0,207.2 1730.0,204.7 1731.0,204.0 1732.0,209.5 1733.0,205.6 1734.0,198.3 1735.0,202.4 1736.0,210.6 1737.0,208.8 1738.0,207.5 1739.0,205.5 1740.0,208.5 1741.0,216.4 1742.0,206.6 1743.0,207.0 1744.0,204.6 1745.0,209.7 1746.0,211.3 1747.0,207.7 1748.0,208.5 1749.0,207.6 1750.0,209.5 1751.0,207.9 1752.0,208.1 1753.0,208.2 1754.0,207.0 1755.0,207.7 1756.0,211.2 1757.0,208.7 1758.0,210.6 1759.0,208.4 1760.0,213.3 1761.0,208.9 1762.0,210.9 1763.0,209.8 1764.0,212.7 1765.0,210.4 1766.0,207.6 1767.0,206.1 1768.0,207.8 1769.0,213.2 1770.0,218.6 1771.0,214.0 1772.0,210.2 1773.0,212.5 1774.0,208.6 1775.0,212.9 1776.0,214.3 1777.0,214.2 1778.0,217.8 1779.0,215.7 1780.0,212.1 1781.0,212.1 1782.0,215.4 1783.0,214.3 1784.0,209.3 1785.0,207.1 1786.0,201.9 1787.0,200.5 1788.0,192.6 1789.0,182.0 1790.0,168.3 1791.0,170.7 1792.0,172.4 1793.0,169.4 1794.0,163.7 1795.0,161.5 1796.0,164.5 1797.0,168.1 1798.0,165.1 1799.0,169.4 1800.0,169.5 1801.0,170.3 1802.0,170.2 1803.0,171.5 1804.0,170.9 1805.0,173.3 1806.0,167.8 1807.0,163.2 1808.0,166.4 1809.0,172.3 1810.0,165.8 1811.0,169.0 1812.0,167.2 1813.0,174.3 1814.0,170.7 1815.0,173.4 1816.0,174.3 1817.0,180.9 1818.0,185.6 1819.0,183.6 1820.0,183.0" fill="none" stroke="#e8e8f0" stroke-width="1.3" stroke-linejoin="round"/>
<rect x="975.00" y="40.00" width="846.00" height="2.00" fill="#a8a8a8" />
<rect x="1820.00" y="40.00" width="1.50" height="224.00" fill="#a8a8a8" />
<rect x="975.00" y="262.80" width="846.00" height="1.50" fill="#a8a8a8" />
<rect x="975.00" y="40.00" width="1.00" height="224.00" fill="#a8a8a8" />
<rect x="976.20" y="42.00" width="2.00" height="221.00" fill="#c01818" />
<line x1="1398.30" y1="42.00" x2="1398.30" y2="263.00" stroke="#e8e800" stroke-width="1" />
<text x="921.74" y="47.30" font-size="19.50" textLength="39.35" lengthAdjust="spacingAndGlyphs" fill="#ffffff" >40.0</text>
<text x="921.17" y="92.80" font-size="19.50" textLength="39.93" lengthAdjust="spacingAndGlyphs" fill="#ffffff" >20.0</text>
<text x="932.19" y="137.30" font-size="19.50" textLength="28.93" lengthAdjust="spacingAndGlyphs" fill="#ffffff" >0.0</text>
<text x="914.80" y="181.80" font-size="19.50" textLength="46.30" lengthAdjust="spacingAndGlyphs" fill="#ffffff" >-20.0</text>
<text x="914.80" y="226.80" font-size="19.50" textLength="46.30" lengthAdjust="spacingAndGlyphs" fill="#ffffff" >-40.0</text>
<text x="914.80" y="271.30" font-size="19.50" textLength="46.30" lengthAdjust="spacingAndGlyphs" fill="#ffffff" >-60.0</text>
<text x="1022.98" y="287.60" font-size="20.50" textLength="50.91" lengthAdjust="spacingAndGlyphs" fill="#ffffff" >224.8</text>
<text x="1113.84" y="287.60" font-size="20.50" textLength="34.09" lengthAdjust="spacingAndGlyphs" fill="#ffffff" >225</text>
<text x="1187.91" y="287.60" font-size="20.50" textLength="51.05" lengthAdjust="spacingAndGlyphs" fill="#ffffff" >225.2</text>
<text x="1270.39" y="287.60" font-size="20.50" textLength="50.61" lengthAdjust="spacingAndGlyphs" fill="#ffffff" >225.4</text>
<text x="1352.86" y="287.60" font-size="20.50" textLength="50.92" lengthAdjust="spacingAndGlyphs" fill="#ffffff" >225.6</text>
<text x="1435.33" y="287.60" font-size="20.50" textLength="50.91" lengthAdjust="spacingAndGlyphs" fill="#ffffff" >225.8</text>
<text x="1526.19" y="287.60" font-size="20.50" textLength="34.13" lengthAdjust="spacingAndGlyphs" fill="#ffffff" >226</text>
<text x="1600.26" y="287.60" font-size="20.50" textLength="51.05" lengthAdjust="spacingAndGlyphs" fill="#ffffff" >226.2</text>
<text x="1682.74" y="287.60" font-size="20.50" textLength="50.61" lengthAdjust="spacingAndGlyphs" fill="#ffffff" >226.4</text>
<text x="1765.21" y="287.60" font-size="20.50" textLength="50.92" lengthAdjust="spacingAndGlyphs" fill="#ffffff" >226.6</text>
<text x="1305.75" y="320.00" font-size="23.50" textLength="183.22" lengthAdjust="spacingAndGlyphs" fill="#ffffff" >Frequency (MHz)</text>
<g transform="translate(880,230.6) rotate(-90)">
<text x="-1.92" y="0.00" font-size="25.00" textLength="160.38" lengthAdjust="spacingAndGlyphs" fill="#ffffff" >Magnitude (dB)</text>
</g>
<rect x="0.00" y="339.00" width="1866.00" height="7.30" fill="#808080" />
<rect x="0.00" y="346.30" width="1866.00" height="58.70" fill="#262626" />
<rect x="825.00" y="346.30" width="1041.00" height="58.70" fill="#262626" />
<rect x="386.00" y="346.30" width="435.00" height="58.70" fill="#2d2d2d" />
<rect x="200.30" y="346.30" width="185.70" height="58.70" fill="#2a2a2a" />
<rect x="821.00" y="346.30" width="4.00" height="58.70" fill="#f0f0f0" />
<rect x="0.00" y="404.80" width="1866.00" height="1.40" fill="#e8e8e8" />
<text x="10.09" y="388.40" font-size="24.56" textLength="60.91" lengthAdjust="spacingAndGlyphs" fill="#ffffff" font-style="italic" >DAB+</text>
<rect x="96.20" y="361.90" width="88.00" height="31.20" fill="none" rx="3.5" stroke="#7a7a7a" stroke-width="1.2"/>
<text x="98.10" y="383.90" font-size="20.20" textLength="32.77" lengthAdjust="spacingAndGlyphs" fill="#ffffff" >12B</text>
<path d="M152.4,373 L167.7,373 L160,381.2 Z" fill="#ffffff" stroke="none" stroke-width="1" />
<text x="223.13" y="385.00" font-size="22.82" textLength="97.47" lengthAdjust="spacingAndGlyphs" fill="#ffffff" >EId: 1156</text>
<text x="349.69" y="386.10" font-size="25.29" textLength="50.39" lengthAdjust="spacingAndGlyphs" fill="#eef028" >NDR</text>
<text x="406.02" y="386.10" font-size="25.29" textLength="29.94" lengthAdjust="spacingAndGlyphs" fill="#eef028" >SH</text>
<text x="442.22" y="386.10" font-size="25.29" textLength="23.97" lengthAdjust="spacingAndGlyphs" fill="#eef028" >FL</text>
<rect x="200.30" y="346.30" width="185.80" height="58.70" fill="rgba(255,165,0,0.6)" />
<rect x="200.00" y="346.30" width="1.20" height="58.70" fill="rgba(255,230,180,0.7)" />
<text x="494.80" y="386.10" font-size="24.13" textLength="122.41" lengthAdjust="spacingAndGlyphs" fill="#ffffff" >2023-06-07</text>
<text x="631.17" y="386.10" font-size="24.13" textLength="108.74" lengthAdjust="spacingAndGlyphs" fill="#ffffff" >14:46:29 Z</text>
<rect x="840.90" y="361.50" width="37.00" height="32.50" fill="none" rx="3.5" stroke="#6e6e6e" stroke-width="1.2"/>
<path d="M850,373.6 L865.8,373.6 L857.9,380.9 Z" fill="#ffffff" stroke="none" stroke-width="1" />
<circle cx="930.50" cy="378.70" r="17.40" fill="#2b6aa0" />
<circle cx="930.30" cy="378.60" r="7.10" fill="#ff0000" />
<circle cx="983.10" cy="378.70" r="17.20" fill="#1f4a72" />
<rect x="975.80" y="370.50" width="14.20" height="15.30" fill="#151515" />
<text x="1042.41" y="386.80" font-size="24.42" textLength="99.35" lengthAdjust="spacingAndGlyphs" fill="#ffffff" >SId: D5E1</text>
<text x="1187.43" y="387.20" font-size="38.08" textLength="75.69" lengthAdjust="spacingAndGlyphs" fill="#ffff1e" >NDR</text>
<text x="1271.94" y="387.20" font-size="38.08" textLength="15.74" lengthAdjust="spacingAndGlyphs" fill="#ffff1e" >1</text>
<text x="1299.78" y="387.20" font-size="38.08" textLength="46.44" lengthAdjust="spacingAndGlyphs" fill="#ffff1e" >SH</text>
<text x="1355.11" y="387.20" font-size="38.08" textLength="35.40" lengthAdjust="spacingAndGlyphs" fill="#ffff1e" >FL</text>
<text x="1434.49" y="386.80" font-size="24.42" textLength="96.37" lengthAdjust="spacingAndGlyphs" fill="#ffffff" >104 kbps</text>
<text x="1544.22" y="386.80" font-size="24.42" textLength="83.32" lengthAdjust="spacingAndGlyphs" fill="#ffffff" >EEP 2-A</text>
<path d="M1677.5,368 L1685.5,368 L1700.8,358.6 L1700.8,396 L1685.5,385.4 L1677.5,385.4 Z" fill="none" stroke="#e8e8e8" stroke-width="2.4" stroke-linejoin="round"/>
<line x1="1685.50" y1="368.00" x2="1685.50" y2="385.40" stroke="#e8e8e8" stroke-width="2.2" />
<rect x="1792.90" y="359.80" width="90.00" height="31.50" fill="none" rx="3.5" stroke="#7a7a7a" stroke-width="1.2"/>
<text x="1793.67" y="382.00" font-size="19.77" textLength="38.31" lengthAdjust="spacingAndGlyphs" fill="#ffffff" >DAB</text>
<path d="M1849,371.3 L1864.5,371.3 L1856.7,378.5 Z" fill="#ffffff" stroke="none" stroke-width="1" />
<rect x="0.00" y="406.20" width="287.40" height="511.00" fill="#1a5886" />
<rect x="0.00" y="406.20" width="287.40" height="50.50" fill="#0e2a4c" />
<rect x="287.40" y="406.20" width="7.80" height="511.00" fill="#eceef2" />
<text x="1.39" y="441.50" font-size="31.98" textLength="63.67" lengthAdjust="spacingAndGlyphs" fill="#ffff1e" >NDR</text>
<text x="71.30" y="441.50" font-size="31.98" textLength="14.58" lengthAdjust="spacingAndGlyphs" fill="#ffff1e" >1</text>
<text x="95.62" y="441.50" font-size="31.98" textLength="39.29" lengthAdjust="spacingAndGlyphs" fill="#ffff1e" >SH</text>
<text x="140.92" y="441.50" font-size="31.98" textLength="30.96" lengthAdjust="spacingAndGlyphs" fill="#ffff1e" >FL</text>
<rect x="0.00" y="459.00" width="188.80" height="37.00" fill="#2068a0" stroke="#3a90d0" stroke-width="1.4"/>
<rect x="2.50" y="461.50" width="183.50" height="32.00" fill="none" stroke="#0a1a2a" stroke-width="1.3" stroke-dasharray="1.6,2.4"/>
<text x="3.78" y="488.10" font-size="23.98" textLength="135.66" lengthAdjust="spacingAndGlyphs" fill="#ffffff" >NDR 1 SH FL</text>
<text x="3.74" y="526.00" font-size="23.98" textLength="105.91" lengthAdjust="spacingAndGlyphs" fill="#ffffff" >NDR 2 SH</text>
<text x="3.71" y="563.90" font-size="23.98" textLength="102.31" lengthAdjust="spacingAndGlyphs" fill="#ffffff" >NDR Blue</text>
<text x="3.69" y="601.80" font-size="23.98" textLength="134.40" lengthAdjust="spacingAndGlyphs" fill="#ffffff" >NDR Info SH</text>
<text x="3.69" y="639.70" font-size="23.98" textLength="178.87" lengthAdjust="spacingAndGlyphs" fill="#ffffff" >NDR Info Spezial</text>
<text x="3.66" y="677.60" font-size="23.98" textLength="119.33" lengthAdjust="spacingAndGlyphs" fill="#ffffff" >NDR Kultur</text>
<text x="3.72" y="715.50" font-size="23.98" textLength="146.46" lengthAdjust="spacingAndGlyphs" fill="#ffffff" >NDR Schlager</text>
<text x="3.76" y="753.40" font-size="23.98" textLength="67.13" lengthAdjust="spacingAndGlyphs" fill="#ffffff" >N-JOY</text>
<rect x="295.20" y="406.20" width="271.00" height="511.00" fill="#1a5886" />
<rect x="295.20" y="406.20" width="271.00" height="50.30" fill="#0e2a4c" />
<rect x="566.30" y="406.20" width="5.20" height="511.00" fill="#c4cede" />
<text x="302.18" y="440.80" font-size="29.94" textLength="195.78" lengthAdjust="spacingAndGlyphs" fill="#ffffff" >Service Quality</text>
<rect x="490.20" y="473.10" width="59.80" height="37.50" fill="#808080" />
<rect x="490.20" y="473.10" width="18.00" height="37.50" fill="#ffa500" />
<text x="309.92" y="500.50" font-size="20.93" textLength="82.68" lengthAdjust="spacingAndGlyphs" fill="#ffffff" >SNR (dB)</text>
<text x="503.19" y="498.80" font-size="16.86" textLength="33.52" lengthAdjust="spacingAndGlyphs" fill="#f4f4f4" >10,4</text>
<rect x="490.20" y="519.30" width="59.80" height="37.50" fill="#808080" />
<rect x="490.20" y="519.30" width="60.00" height="37.50" fill="#008000" />
<text x="309.19" y="546.60" font-size="20.93" textLength="94.03" lengthAdjust="spacingAndGlyphs" fill="#ffffff" >FIC (ok %)</text>
<text x="505.05" y="544.70" font-size="16.86" textLength="29.65" lengthAdjust="spacingAndGlyphs" fill="#f4f4d0" >100</text>
<rect x="490.20" y="565.50" width="59.80" height="37.50" fill="#808080" />
<rect x="490.20" y="565.50" width="60.00" height="37.50" fill="#008000" />
<text x="309.19" y="592.70" font-size="20.93" textLength="89.22" lengthAdjust="spacingAndGlyphs" fill="#ffffff" >RS (ok %)</text>
<text x="505.05" y="590.80" font-size="16.86" textLength="29.65" lengthAdjust="spacingAndGlyphs" fill="#f4f4d0" >100</text>
<rect x="490.20" y="611.70" width="59.80" height="37.50" fill="#808080" />
<rect x="490.20" y="611.70" width="60.00" height="37.50" fill="#008000" />
<text x="309.04" y="638.80" font-size="20.93" textLength="114.39" lengthAdjust="spacingAndGlyphs" fill="#ffffff" >Null Symbol</text>
<rect x="490.20" y="657.90" width="59.80" height="37.50" fill="#808080" />
<rect x="490.20" y="657.90" width="19.90" height="37.50" fill="#008000" />
<text x="309.87" y="684.90" font-size="20.93" textLength="159.89" lengthAdjust="spacingAndGlyphs" fill="#ffffff" >SymbolTime (ms)</text>
<text x="503.84" y="683.20" font-size="16.86" textLength="33.03" lengthAdjust="spacingAndGlyphs" fill="#f4f4f4" >0,50</text>
<rect x="490.20" y="704.10" width="59.80" height="37.50" fill="#808080" />
<rect x="490.20" y="704.10" width="38.20" height="37.50" fill="#008000" />
<text x="309.14" y="731.00" font-size="20.93" textLength="149.31" lengthAdjust="spacingAndGlyphs" fill="#ffffff" >FrameTime (ms)</text>
<text x="503.70" y="729.30" font-size="16.86" textLength="33.16" lengthAdjust="spacingAndGlyphs" fill="#f4f4f4" >96,0</text>
<rect x="571.50" y="406.20" width="404.20" height="511.00" fill="#1a5886" />
<rect x="571.50" y="406.20" width="404.20" height="51.40" fill="#0e2a4c" />
<rect x="579.60" y="457.60" width="396.00" height="49.00" fill="#0e2a4c" />
<rect x="975.70" y="406.20" width="7.80" height="511.00" fill="#eceef2" />
<path d="M583,457.6 L583,421.3 A4,4 0 0 1 587,417.3 L749.9,417.3 A14,14 0 0 1 763.9,431.3 L763.9,457.6 Z" fill="#888888" stroke="none" stroke-width="1" />
<path d="M583,457.6 L583,421.3 A4,4 0 0 1 587,417.3 L749.9,417.3 A14,14 0 0 1 763.9,431.3 L763.9,457.6" fill="none" stroke="#9a9a9a" stroke-width="1" />
<path d="M765.2,457.6 L765.2,421.3 A4,4 0 0 1 769.2,417.3 L976,417.3 A14,14 0 0 1 990,431.3 L990,457.6 Z" fill="#888888" stroke="none" stroke-width="1" />
<path d="M765.2,457.6 L765.2,421.3 A4,4 0 0 1 769.2,417.3 L976,417.3 A14,14 0 0 1 990,431.3 L990,457.6" fill="none" stroke="#9a9a9a" stroke-width="1" />
<path d="M583,506.7 L583,470.2 A4,4 0 0 1 587,466.2 L706.3,466.2 A14,14 0 0 1 720.3,480.2 L720.3,506.7 Z" fill="#888888" stroke="none" stroke-width="1" />
<path d="M583,506.7 L583,470.2 A4,4 0 0 1 587,466.2 L706.3,466.2 A14,14 0 0 1 720.3,480.2 L720.3,506.7" fill="none" stroke="#9a9a9a" stroke-width="1" />
<path d="M834.4,506.7 L834.4,470.2 A4,4 0 0 1 838.4,466.2 L976,466.2 A14,14 0 0 1 990,480.2 L990,506.7 Z" fill="#888888" stroke="none" stroke-width="1" />
<path d="M834.4,506.7 L834.4,470.2 A4,4 0 0 1 838.4,466.2 L976,466.2 A14,14 0 0 1 990,480.2 L990,506.7" fill="none" stroke="#9a9a9a" stroke-width="1" />
<path d="M721.3,507.5 L721.3,470.2 A4,4 0 0 1 725.3,466.2 L819,466.2 A14,14 0 0 1 833,480.2 L833,507.5 Z" fill="#1a5886" stroke="none" stroke-width="1" />
<path d="M721.3,507.5 L721.3,470.2 A4,4 0 0 1 725.3,466.2 L819,466.2 A14,14 0 0 1 833,480.2 L833,507.5" fill="none" stroke="#4a7aa8" stroke-width="1" />
<rect x="571.50" y="506.70" width="404.20" height="2.00" fill="#1a5886" />
<rect x="721.80" y="500.00" width="110.70" height="8.00" fill="#1a5886" />
<rect x="975.70" y="406.20" width="7.80" height="120.00" fill="#eceef2" />
<text x="650.25" y="448.70" font-size="25.15" textLength="48.34" lengthAdjust="spacingAndGlyphs" fill="#e4e4e4" >AAC</text>
<text x="831.37" y="448.90" font-size="25.15" textLength="89.78" lengthAdjust="spacingAndGlyphs" fill="#e4e4e4" >Options</text>
<text x="626.35" y="497.50" font-size="25.15" textLength="51.36" lengthAdjust="spacingAndGlyphs" fill="#e4e4e4" >Sync</text>
<text x="764.06" y="498.00" font-size="25.15" textLength="28.06" lengthAdjust="spacingAndGlyphs" fill="#ffffff" >TII</text>
<text x="878.35" y="498.00" font-size="25.15" textLength="66.75" lengthAdjust="spacingAndGlyphs" fill="#e4e4e4" >Audio</text>
<circle cx="630.60" cy="529.30" r="6.60" fill="#ff0000" />
<rect x="666.80" y="522.00" width="13.30" height="13.70" fill="#0f2a48" />
<line x1="593.50" y1="551.10" x2="964.80" y2="551.10" stroke="#8fb4d6" stroke-width="1.3" />
<text x="592.76" y="598.70" font-size="22.53" textLength="72.30" lengthAdjust="spacingAndGlyphs" fill="#ffffff" >Pattern</text>
<text x="693.88" y="598.70" font-size="22.53" textLength="70.23" lengthAdjust="spacingAndGlyphs" fill="#ffffff" >MainId</text>
<text x="793.40" y="598.70" font-size="22.53" textLength="57.73" lengthAdjust="spacingAndGlyphs" fill="#ffffff" >SubId</text>
<text x="880.17" y="598.70" font-size="22.53" textLength="86.11" lengthAdjust="spacingAndGlyphs" fill="#ffffff" >Strength</text>
<line x1="593.50" y1="604.70" x2="964.80" y2="604.70" stroke="#b8c8d8" stroke-width="1.3" />
<text x="595.88" y="643.30" font-size="20.35" textLength="45.71" lengthAdjust="spacingAndGlyphs" fill="#ffffff" >0x4b</text>
<text x="697.44" y="643.30" font-size="20.35" textLength="22.76" lengthAdjust="spacingAndGlyphs" fill="#ffffff" >16</text>
<text x="796.10" y="643.30" font-size="20.35" textLength="12.21" lengthAdjust="spacingAndGlyphs" fill="#ffffff" >2</text>
<text x="883.21" y="643.30" font-size="20.35" textLength="39.28" lengthAdjust="spacingAndGlyphs" fill="#ffffff" >0.94</text>
<rect x="983.50" y="406.20" width="882.50" height="511.00" fill="#000000" />
<rect x="983.50" y="406.20" width="882.50" height="29.60" fill="#0e2a4c" />
<text x="1276.62" y="427.70" font-size="22.82" textLength="319.21" lengthAdjust="spacingAndGlyphs" fill="#ffffff" >Channel Impulse Response (CIR)</text>
<path d="M1837.5,413.5 L1855,413.5 L1846.2,429.4 Z" fill="none" stroke="#e0e8f0" stroke-width="1.3" />
<line x1="1231.00" y1="437.00" x2="1231.00" y2="913.00" stroke="#1c1c1c" stroke-width="1.2" />
<rect x="983.50" y="912.80" width="882.50" height="4.20" fill="#838383" />
<circle cx="1008.50" cy="463.80" r="9.60" fill="#e0e0e0" />
<text x="1023.32" y="470.90" font-size="18.17" textLength="52.33" lengthAdjust="spacingAndGlyphs" fill="#ffffff" >Freeze</text>
<circle cx="1115.00" cy="463.80" r="9.60" fill="#e0e0e0" />
<text x="1130.70" y="470.90" font-size="18.17" textLength="68.63" lengthAdjust="spacingAndGlyphs" fill="#ffffff" >Gradient</text>
<text x="1005.78" y="532.00" font-size="18.60" textLength="134.02" lengthAdjust="spacingAndGlyphs" fill="#ffffff" >Smoothing Level</text>
<rect x="1008.20" y="544.00" width="1.30" height="6.00" fill="#b0b0b0" />
<rect x="1027.87" y="544.00" width="1.30" height="6.00" fill="#b0b0b0" />
<rect x="1047.54" y="544.00" width="1.30" height="6.00" fill="#b0b0b0" />
<rect x="1067.21" y="544.00" width="1.30" height="6.00" fill="#b0b0b0" />
<rect x="1086.88" y="544.00" width="1.30" height="6.00" fill="#b0b0b0" />
<rect x="1106.55" y="544.00" width="1.30" height="6.00" fill="#b0b0b0" />
<rect x="1126.22" y="544.00" width="1.30" height="6.00" fill="#b0b0b0" />
<rect x="1145.89" y="544.00" width="1.30" height="6.00" fill="#b0b0b0" />
<rect x="1165.56" y="544.00" width="1.30" height="6.00" fill="#b0b0b0" />
<rect x="1185.23" y="544.00" width="1.30" height="6.00" fill="#b0b0b0" />
<rect x="1204.90" y="544.00" width="1.30" height="6.00" fill="#b0b0b0" />
<rect x="999.00" y="559.90" width="217.00" height="3.00" fill="#e4e4e4" rx="1.5"/>
<circle cx="1028.60" cy="560.60" r="9.80" fill="url(#thumbg)" />
<text x="1005.62" y="613.00" font-size="18.17" textLength="63.46" lengthAdjust="spacingAndGlyphs" fill="#ffffff" >Zoom X</text>
<rect x="1000.00" y="634.50" width="216.00" height="3.00" fill="#e4e4e4" rx="1.5"/>
<circle cx="1009.50" cy="636.20" r="9.60" fill="url(#thumbg)" />
<text x="1005.63" y="688.40" font-size="18.17" textLength="62.76" lengthAdjust="spacingAndGlyphs" fill="#ffffff" >Zoom Y</text>
<rect x="1000.00" y="709.00" width="216.00" height="3.00" fill="#e4e4e4" rx="1.5"/>
<circle cx="1009.50" cy="710.60" r="9.60" fill="url(#thumbg)" />
<text x="1006.00" y="762.70" font-size="18.17" textLength="47.53" lengthAdjust="spacingAndGlyphs" fill="#ffffff" >x-Axis</text>
<circle cx="1023.70" cy="786.50" r="8.30" fill="#f4f4f4" stroke="#3a3a3a" stroke-width="0.8"/>
<text x="1041.53" y="793.20" font-size="18.17" textLength="66.39" lengthAdjust="spacingAndGlyphs" fill="#ffffff" >Samples</text>
<circle cx="1023.70" cy="816.00" r="8.30" fill="#f4f4f4" stroke="#3a3a3a" stroke-width="0.8"/>
<circle cx="1023.70" cy="816.00" r="4.20" fill="#2a2a2a" />
<text x="1040.84" y="822.70" font-size="18.17" textLength="69.04" lengthAdjust="spacingAndGlyphs" fill="#ffffff" >Distance</text>
<circle cx="1023.70" cy="845.50" r="8.30" fill="#f4f4f4" stroke="#3a3a3a" stroke-width="0.8"/>
<text x="1041.90" y="852.20" font-size="18.17" textLength="39.49" lengthAdjust="spacingAndGlyphs" fill="#ffffff" >Time</text>
<line x1="1356.50" y1="535.84" x2="1840.00" y2="535.84" stroke="#9a9a9a" stroke-width="1" />
<line x1="1356.50" y1="606.68" x2="1840.00" y2="606.68" stroke="#9a9a9a" stroke-width="1" />
<line x1="1356.50" y1="677.52" x2="1840.00" y2="677.52" stroke="#9a9a9a" stroke-width="1" />
<line x1="1356.50" y1="748.36" x2="1840.00" y2="748.36" stroke="#9a9a9a" stroke-width="1" />
<line x1="1378.94" y1="465.00" x2="1378.94" y2="819.20" stroke="#9a9a9a" stroke-width="1" />
<line x1="1411.36" y1="465.00" x2="1411.36" y2="819.20" stroke="#9a9a9a" stroke-width="1" />
<line x1="1443.78" y1="465.00" x2="1443.78" y2="819.20" stroke="#9a9a9a" stroke-width="1" />
<line x1="1476.20" y1="465.00" x2="1476.20" y2="819.20" stroke="#9a9a9a" stroke-width="1" />
<line x1="1508.62" y1="465.00" x2="1508.62" y2="819.20" stroke="#9a9a9a" stroke-width="1" />
<line x1="1541.04" y1="465.00" x2="1541.04" y2="819.20" stroke="#9a9a9a" stroke-width="1" />
<line x1="1573.46" y1="465.00" x2="1573.46" y2="819.20" stroke="#9a9a9a" stroke-width="1" />
<line x1="1605.88" y1="465.00" x2="1605.88" y2="819.20" stroke="#9a9a9a" stroke-width="1" />
<line x1="1638.30" y1="465.00" x2="1638.30" y2="819.20" stroke="#9a9a9a" stroke-width="1" />
<line x1="1670.72" y1="465.00" x2="1670.72" y2="819.20" stroke="#9a9a9a" stroke-width="1" />
<line x1="1703.14" y1="465.00" x2="1703.14" y2="819.20" stroke="#9a9a9a" stroke-width="1" />
<line x1="1735.56" y1="465.00" x2="1735.56" y2="819.20" stroke="#9a9a9a" stroke-width="1" />
<line x1="1767.98" y1="465.00" x2="1767.98" y2="819.20" stroke="#9a9a9a" stroke-width="1" />
<line x1="1800.40" y1="465.00" x2="1800.40" y2="819.20" stroke="#9a9a9a" stroke-width="1" />
<line x1="1832.82" y1="465.00" x2="1832.82" y2="819.20" stroke="#9a9a9a" stroke-width="1" />
<rect x="1356.00" y="464.00" width="485.00" height="2.00" fill="#a8a8a8" />
<rect x="1839.00" y="464.00" width="1.50" height="356.00" fill="#a8a8a8" />
<rect x="1356.00" y="818.40" width="485.00" height="1.60" fill="#a8a8a8" />
<rect x="1355.00" y="464.00" width="1.20" height="356.00" fill="#a8a8a8" />
<line x1="1357.50" y1="466.00" x2="1357.50" y2="678.00" stroke="#e8dc80" stroke-width="1" stroke-dasharray="1.5,1.5"/>
<line x1="1357.60" y1="678.00" x2="1357.60" y2="818.00" stroke="#e0d060" stroke-width="1.1" />
<polyline points="1357.0,699.1 1357.6,674.9 1358.0,692.2 1358.5,710.1 1359.0,725.5 1359.5,727.4 1360.0,723.1 1360.5,723.1 1361.0,780.5 1361.5,750.3 1362.0,730.3 1362.5,724.1 1363.0,732.5 1363.5,744.2 1364.0,742.3 1364.5,752.8 1365.0,746.3 1365.5,737.5 1366.0,786.4 1366.5,747.0 1367.0,726.7 1367.5,707.1 1368.0,695.4 1368.5,658.3 1369.0,619.5 1369.5,657.7 1370.0,697.0 1370.5,717.3 1371.0,720.5 1371.5,735.2 1372.0,730.5 1372.5,759.7 1373.0,730.6 1373.5,725.8 1374.0,764.4 1374.5,743.4 1375.0,732.3 1375.5,754.3 1376.0,730.0 1376.5,737.4 1377.0,797.5 1377.5,776.0 1378.0,737.5 1378.5,755.6 1379.0,728.2 1379.5,736.7 1380.0,763.8 1380.5,725.7 1381.0,728.0 1381.5,753.3 1382.0,746.0 1382.5,749.5 1383.0,752.9 1383.5,734.0 1384.0,780.8 1384.5,736.0 1385.0,762.1 1385.5,790.7 1386.0,777.4 1386.5,731.7 1387.0,724.6 1387.5,760.3 1388.0,737.6 1388.5,740.8 1389.0,735.1 1389.5,738.0 1390.0,751.5 1390.5,740.4 1391.0,783.1 1391.5,739.1 1392.0,745.8 1392.5,742.0 1393.0,750.4 1393.5,774.7 1394.0,804.3 1394.5,753.2 1395.0,732.1 1395.5,780.5 1396.0,758.8 1396.5,755.0 1397.0,747.4 1397.5,816.4 1398.0,730.3 1398.5,781.8 1399.0,765.1 1399.5,786.8 1400.0,747.9 1400.5,782.4 1401.0,751.2 1401.5,760.4 1402.0,763.6 1402.5,760.5 1403.0,736.5 1403.5,786.7 1404.0,772.7 1404.5,761.4 1405.0,753.5 1405.5,769.9 1406.0,730.3 1406.5,744.3 1407.0,767.9 1407.5,790.3 1408.0,743.5 1408.5,762.8 1409.0,738.1 1409.5,756.5 1410.0,744.6 1410.5,756.6 1411.0,736.8 1411.5,781.7 1412.0,777.3 1412.5,740.6 1413.0,734.4 1413.5,773.9 1414.0,760.8 1414.5,734.5 1415.0,747.3 1415.5,744.5 1416.0,755.7 1416.5,771.2 1417.0,807.9 1417.5,723.5 1418.0,772.9 1418.5,749.7 1419.0,738.0 1419.5,729.8 1420.0,742.1 1420.5,732.4 1421.0,725.9 1421.5,740.0 1422.0,750.9 1422.5,791.5 1423.0,756.0 1423.5,730.4 1424.0,717.4 1424.5,732.5 1425.0,738.2 1425.5,747.4 1426.0,752.1 1426.5,765.4 1427.0,776.3 1427.5,755.7 1428.0,728.6 1428.5,777.4 1429.0,742.9 1429.5,767.3 1430.0,791.1 1430.5,737.2 1431.0,761.4 1431.5,762.7 1432.0,734.5 1432.5,804.3 1433.0,750.9 1433.5,782.1 1434.0,774.2 1434.5,746.8 1435.0,751.5 1435.5,724.4 1436.0,766.9 1436.5,732.0 1437.0,739.5 1437.5,731.4 1438.0,748.8 1438.5,760.6 1439.0,794.1 1439.5,732.7 1440.0,741.1 1440.5,765.7 1441.0,762.3 1441.5,757.7 1442.0,747.8 1442.5,783.6 1443.0,737.5 1443.5,754.4 1444.0,755.7 1444.5,750.2 1445.0,751.2 1445.5,746.3 1446.0,740.7 1446.5,746.7 1447.0,755.6 1447.5,741.1 1448.0,788.2 1448.5,743.9 1449.0,730.3 1449.5,776.7 1450.0,746.0 1450.5,752.0 1451.0,779.5 1451.5,716.0 1452.0,729.5 1452.5,733.7 1453.0,736.2 1453.5,756.1 1454.0,727.2 1454.5,731.6 1455.0,748.0 1455.5,742.3 1456.0,747.0 1456.5,751.5 1457.0,754.7 1457.5,753.6 1458.0,771.1 1458.5,764.0 1459.0,775.4 1459.5,777.8 1460.0,729.7 1460.5,725.7 1461.0,731.6 1461.5,725.2 1462.0,766.2 1462.5,728.1 1463.0,740.8 1463.5,732.3 1464.0,750.6 1464.5,726.6 1465.0,743.6 1465.5,753.2 1466.0,730.9 1466.5,720.3 1467.0,746.0 1467.5,729.2 1468.0,729.8 1468.5,778.4 1469.0,761.8 1469.5,762.9 1470.0,734.5 1470.5,734.4 1471.0,735.3 1471.5,711.4 1472.0,734.4 1472.5,724.6 1473.0,725.7 1473.5,707.9 1474.0,703.2 1474.5,688.9 1475.0,659.9 1475.5,620.5 1476.2,555.9 1477.0,629.0 1477.5,662.8 1478.0,685.8 1478.5,695.4 1479.0,704.0 1479.5,707.6 1480.0,709.2 1480.5,717.1 1481.0,716.3 1481.5,705.0 1482.0,724.4 1482.5,717.0 1483.0,722.0 1483.5,732.7 1484.0,728.0 1484.5,755.0 1485.0,743.7 1485.5,759.7 1486.0,745.1 1486.5,730.2 1487.0,728.4 1487.5,734.9 1488.0,760.9 1488.5,745.2 1489.0,746.7 1489.5,784.9 1490.0,729.5 1490.5,751.9 1491.0,776.5 1491.5,735.1 1492.0,748.7 1492.5,750.9 1493.0,741.7 1493.5,747.5 1494.0,738.2 1494.5,755.7 1495.0,759.7 1495.5,738.9 1496.0,723.9 1496.5,732.1 1497.0,777.1 1497.5,758.3 1498.0,782.1 1498.5,722.0 1499.0,743.2 1499.5,794.5 1500.0,780.1 1500.5,759.3 1501.0,766.0 1501.5,750.2 1502.0,742.1 1502.5,729.6 1503.0,725.2 1503.5,741.4 1504.0,735.2 1504.5,751.9 1505.0,748.2 1505.5,815.4 1506.0,734.0 1506.5,725.6 1507.0,751.9 1507.5,740.0 1508.0,747.3 1508.5,750.6 1509.0,734.0 1509.5,733.7 1510.0,772.3 1510.5,720.0 1511.0,741.1 1511.5,749.5 1512.0,721.4 1512.5,723.8 1513.0,752.5 1513.5,741.4 1514.0,740.1 1514.5,760.4 1515.0,729.4 1515.5,768.0 1516.0,737.7 1516.5,747.0 1517.0,741.7 1517.5,754.1 1518.0,748.7 1518.5,759.0 1519.0,740.4 1519.5,726.5 1520.0,726.0 1520.5,751.8 1521.0,739.5 1521.5,763.4 1522.0,755.3 1522.5,727.2 1523.0,755.8 1523.5,735.3 1524.0,756.5 1524.5,736.9 1525.0,745.1 1525.5,773.0 1526.0,738.6 1526.5,760.8 1527.0,737.3 1527.5,778.7 1528.0,736.6 1528.5,738.2 1529.0,738.4 1529.5,732.4 1530.0,749.1 1530.5,769.8 1531.0,763.1 1531.5,775.5 1532.0,748.7 1532.5,753.3 1533.0,760.1 1533.5,768.8 1534.0,766.4 1534.5,726.7 1535.0,776.0 1535.5,726.3 1536.0,761.1 1536.5,754.9 1537.0,761.6 1537.5,747.3 1538.0,740.7 1538.5,797.6 1539.0,751.7 1539.5,762.5 1540.0,749.2 1540.5,774.7 1541.0,774.4 1541.5,773.6 1542.0,761.1 1542.5,755.1 1543.0,752.3 1543.5,750.0 1544.0,816.4 1544.5,744.7 1545.0,745.8 1545.5,739.3 1546.0,740.0 1546.5,731.6 1547.0,737.0 1547.5,730.8 1548.0,783.7 1548.5,725.8 1549.0,737.2 1549.5,738.3 1550.0,739.3 1550.5,737.1 1551.0,764.8 1551.5,744.0 1552.0,751.7 1552.5,739.1 1553.0,744.6 1553.5,751.8 1554.0,737.3 1554.5,723.7 1555.0,742.9 1555.5,750.4 1556.0,816.4 1556.5,756.9 1557.0,747.2 1557.5,742.0 1558.0,755.1 1558.5,733.2 1559.0,737.1 1559.5,775.3 1560.0,816.4 1560.5,739.9 1561.0,765.8 1561.5,712.6 1562.0,771.2 1562.5,730.5 1563.0,729.0 1563.5,750.8 1564.0,754.8 1564.5,775.2 1565.0,744.7 1565.5,779.3 1566.0,731.7 1566.5,747.9 1567.0,767.4 1567.5,738.2 1568.0,737.5 1568.5,745.0 1569.0,757.7 1569.5,730.3 1570.0,796.3 1570.5,769.0 1571.0,742.7 1571.5,759.2 1572.0,744.2 1572.5,713.5 1573.0,731.0 1573.5,750.6 1574.0,745.7 1574.5,736.0 1575.0,752.5 1575.5,732.8 1576.0,734.2 1576.5,784.5 1577.0,738.2 1577.5,765.8 1578.0,725.3 1578.5,754.7 1579.0,742.1 1579.5,768.8 1580.0,735.3 1580.5,730.7 1581.0,724.2 1581.5,781.2 1582.0,754.0 1582.5,761.3 1583.0,739.9 1583.5,742.0 1584.0,756.6 1584.5,803.8 1585.0,753.2 1585.5,720.4 1586.0,754.8 1586.5,729.6 1587.0,764.3 1587.5,768.3 1588.0,763.6 1588.5,780.1 1589.0,749.7 1589.5,733.8 1590.0,754.9 1590.5,764.6 1591.0,793.3 1591.5,758.8 1592.0,740.1 1592.5,755.1 1593.0,788.1 1593.5,746.3 1594.0,803.8 1594.5,733.0 1595.0,753.6 1595.5,753.5 1596.0,816.4 1596.5,767.6 1597.0,768.7 1597.5,738.0 1598.0,751.5 1598.5,768.3 1599.0,724.6 1599.5,718.3 1600.0,779.1 1600.5,750.1 1601.0,753.7 1601.5,738.1 1602.0,716.7 1602.5,732.7 1603.0,741.1 1603.5,748.8 1604.0,733.7 1604.5,748.7 1605.0,719.1 1605.5,750.9 1606.0,744.7 1606.5,740.9 1607.0,751.7 1607.5,756.9 1608.0,816.4 1608.5,765.7 1609.0,742.4 1609.5,747.3 1610.0,746.6 1610.5,741.5 1611.0,722.6 1611.5,756.2 1612.0,750.4 1612.5,760.6 1613.0,723.2 1613.5,729.0 1614.0,741.5 1614.5,723.6 1615.0,736.9 1615.5,740.7 1616.0,726.8 1616.5,778.4 1617.0,772.1 1617.5,743.0 1618.0,761.4 1618.5,750.2 1619.0,764.9 1619.5,733.2 1620.0,713.3 1620.5,739.9 1621.0,727.6 1621.5,778.3 1622.0,743.7 1622.5,753.6 1623.0,779.1 1623.5,743.8 1624.0,806.3 1624.5,749.8 1625.0,784.0 1625.5,778.0 1626.0,739.3 1626.5,743.3 1627.0,816.4 1627.5,730.0 1628.0,771.6 1628.5,719.6 1629.0,733.8 1629.5,771.2 1630.0,726.3 1630.5,752.7 1631.0,722.6 1631.5,732.3 1632.0,729.1 1632.5,728.6 1633.0,758.7 1633.5,737.9 1634.0,750.8 1634.5,735.5 1635.0,753.1 1635.5,735.3 1636.0,805.1 1636.5,745.1 1637.0,724.1 1637.5,753.1 1638.0,765.5 1638.5,727.5 1639.0,734.0 1639.5,736.6 1640.0,776.4 1640.5,809.7 1641.0,759.3 1641.5,738.8 1642.0,730.5 1642.5,748.7 1643.0,755.3 1643.5,765.6 1644.0,771.6 1644.5,761.9 1645.0,737.4 1645.5,767.1 1646.0,737.0 1646.5,745.6 1647.0,768.0 1647.5,739.6 1648.0,754.7 1648.5,748.6 1649.0,759.7 1649.5,750.9 1650.0,732.1 1650.5,721.4 1651.0,746.6 1651.5,738.4 1652.0,780.7 1652.5,754.8 1653.0,740.1 1653.5,735.2 1654.0,742.5 1654.5,757.5 1655.0,755.6 1655.5,730.5 1656.0,740.1 1656.5,736.0 1657.0,770.7 1657.5,731.9 1658.0,740.1 1658.5,801.0 1659.0,764.8 1659.5,811.2 1660.0,761.1 1660.5,722.5 1661.0,727.7 1661.5,740.2 1662.0,722.9 1662.5,716.5 1663.0,755.3 1663.5,730.9 1664.0,730.1 1664.5,739.2 1665.0,734.9 1665.5,800.5 1666.0,739.4 1666.5,750.4 1667.0,753.1 1667.5,770.6 1668.0,745.8 1668.5,741.9 1669.0,764.2 1669.5,735.6 1670.0,749.6 1670.5,731.7 1671.0,744.3 1671.5,741.5 1672.0,756.4 1672.5,769.0 1673.0,724.4 1673.5,752.9 1674.0,716.8 1674.5,728.2 1675.0,758.5 1675.5,741.1 1676.0,718.0 1676.5,732.1 1677.0,705.6 1677.8,647.1 1678.5,696.4 1679.0,706.7 1679.5,734.8 1680.0,732.0 1680.5,725.5 1681.0,715.3 1681.5,714.0 1682.0,732.9 1682.5,725.1 1683.0,752.5 1683.5,749.0 1684.0,725.5 1684.5,752.3 1685.0,739.8 1685.5,730.4 1686.0,734.5 1686.5,718.9 1687.0,718.2 1687.5,765.4 1688.0,800.3 1688.5,778.9 1689.0,733.6 1689.5,791.7 1690.0,773.5 1690.5,726.1 1691.0,743.3 1691.5,741.1 1692.0,740.0 1692.5,731.9 1693.0,744.0 1693.5,756.7 1694.0,735.5 1694.5,742.9 1695.0,732.3 1695.5,751.9 1696.0,758.4 1696.5,741.5 1697.0,725.8 1697.5,747.4 1698.0,753.0 1698.5,737.5 1699.0,723.0 1699.5,750.5 1700.0,737.3 1700.5,747.2 1701.0,752.8 1701.5,751.2 1702.0,786.6 1702.5,755.3 1703.0,746.1 1703.5,770.2 1704.0,778.3 1704.5,724.0 1705.0,733.0 1705.5,743.5 1706.0,803.2 1706.5,736.0 1707.0,757.4 1707.5,749.9 1708.0,743.0 1708.5,753.7 1709.0,749.7 1709.5,769.9 1710.0,798.6 1710.5,775.9 1711.0,740.1 1711.5,760.2 1712.0,796.7 1712.5,756.3 1713.0,750.8 1713.5,741.9 1714.0,766.0 1714.5,740.6 1715.0,742.9 1715.5,731.2 1716.0,725.9 1716.5,758.6 1717.0,731.6 1717.5,748.1 1718.0,731.5 1718.5,726.1 1719.0,740.6 1719.5,746.4 1720.0,762.5 1720.5,740.6 1721.0,740.7 1721.5,771.5 1722.0,755.5 1722.5,756.9 1723.0,771.3 1723.5,745.1 1724.0,758.9 1724.5,719.9 1725.0,749.5 1725.5,729.9 1726.0,758.6 1726.5,743.0 1727.0,784.1 1727.5,758.7 1728.0,728.1 1728.5,758.7 1729.0,816.4 1729.5,718.0 1730.0,748.2 1730.5,737.7 1731.0,763.9 1731.5,742.0 1732.0,752.3 1732.5,745.6 1733.0,762.9 1733.5,736.6 1734.0,735.0 1734.5,736.5 1735.0,746.0 1735.5,718.0 1736.0,747.9 1736.5,733.4 1737.0,733.0 1737.5,734.6 1738.0,719.4 1738.5,733.6 1739.0,721.1 1739.5,816.4 1740.0,727.1 1740.5,738.6 1741.0,762.1 1741.5,745.8 1742.0,752.6 1742.5,784.1 1743.0,769.3 1743.5,766.1 1744.0,757.1 1744.5,729.7 1745.0,725.9 1745.5,758.0 1746.0,735.8 1746.5,731.6 1747.0,788.1 1747.5,762.5 1748.0,761.4 1748.5,764.1 1749.0,766.2 1749.5,730.6 1750.0,793.1 1750.5,738.6 1751.0,779.5 1751.5,735.2 1752.0,743.8 1752.5,766.2 1753.0,742.0 1753.5,739.2 1754.0,780.1 1754.5,741.0 1755.0,761.1 1755.5,747.6 1756.0,754.7 1756.5,728.4 1757.0,738.7 1757.5,745.6 1758.0,742.1 1758.5,787.4 1759.0,731.0 1759.5,759.8 1760.0,725.5 1760.5,791.0 1761.0,734.2 1761.5,731.0 1762.0,737.3 1762.5,742.6 1763.0,738.5 1763.5,732.7 1764.0,757.0 1764.5,735.7 1765.0,752.0 1765.5,754.6 1766.0,749.0 1766.5,770.7 1767.0,760.8 1767.5,746.2 1768.0,744.2 1768.5,750.8 1769.0,746.0 1769.5,742.7 1770.0,752.6 1770.5,733.9 1771.0,745.9 1771.5,739.2 1772.0,759.1 1772.5,771.6 1773.0,727.2 1773.5,733.3 1774.0,769.4 1774.5,770.9 1775.0,772.2 1775.5,731.9 1776.0,779.2 1776.5,772.7 1777.0,754.0 1777.5,742.2 1778.0,745.6 1778.5,757.6 1779.0,772.3 1779.5,772.6 1780.0,777.3 1780.5,785.8 1781.0,771.0 1781.5,732.3 1782.0,727.7 1782.5,771.3 1783.0,731.0 1783.5,770.7 1784.0,752.9 1784.5,812.1 1785.0,736.3 1785.5,763.8 1786.0,738.1 1786.5,723.9 1787.0,745.8 1787.5,740.7 1788.0,755.5 1788.5,733.6 1789.0,761.6 1789.5,732.7 1790.0,790.5 1790.5,738.3 1791.0,816.4 1791.5,747.8 1792.0,745.6 1792.5,759.5 1793.0,748.4 1793.5,750.7 1794.0,751.2 1794.5,761.9 1795.0,739.9 1795.5,777.8 1796.0,740.6 1796.5,749.5 1797.0,789.9 1797.5,755.8 1798.0,746.8 1798.5,738.7 1799.0,744.5 1799.5,757.8 1800.0,756.4 1800.5,728.9 1801.0,775.5 1801.5,737.8 1802.0,764.0 1802.5,748.0 1803.0,726.3 1803.5,740.0 1804.0,741.0 1804.5,741.8 1805.0,778.1 1805.5,755.0 1806.0,747.8 1806.5,739.7 1807.0,759.6 1807.5,806.7 1808.0,816.4 1808.5,759.6 1809.0,761.7 1809.5,749.0 1810.0,746.5 1810.5,816.4 1811.0,738.5 1811.5,745.8 1812.0,763.0 1812.5,756.4 1813.0,754.9 1813.5,768.9 1814.0,762.1 1814.5,748.5 1815.0,718.9 1815.5,779.6 1816.0,724.0 1816.5,750.7 1817.0,730.2 1817.5,750.0 1818.0,732.6 1818.5,730.2 1819.0,751.2 1819.5,736.7 1820.0,743.1 1820.5,744.5 1821.0,752.2 1821.5,729.6 1822.0,769.5 1822.5,744.5 1823.0,741.7 1823.5,794.8 1824.0,743.1 1824.5,766.8 1825.0,760.2 1825.5,749.5 1826.0,720.9 1826.5,794.4 1827.0,753.4 1827.5,742.9 1828.0,726.0 1828.5,779.8 1829.0,740.8 1829.5,776.1 1830.0,790.1 1830.5,780.9 1831.0,745.8 1831.5,737.3 1832.0,743.5 1832.5,742.2 1833.0,745.7 1833.5,770.2 1834.0,727.9 1834.5,745.8 1835.0,736.5 1835.5,739.7 1836.0,746.8 1836.5,744.6 1837.0,717.8 1837.5,714.9 1838.0,749.7 1838.5,750.5 1839.0,740.7 1839.5,749.1" fill="none" stroke="#f0f0f0" stroke-width="1.3" stroke-linejoin="bevel"/>
<circle cx="1369.00" cy="631.30" r="6.20" fill="#e00000" />
<circle cx="1476.00" cy="597.30" r="6.40" fill="#ffee00" />
<circle cx="1358.20" cy="708.20" r="6.20" fill="#2aa0d8" />
<text x="1299.38" y="473.20" font-size="18.50" textLength="47.02" lengthAdjust="spacingAndGlyphs" fill="#ffffff" >-10.0</text>
<text x="1299.38" y="544.04" font-size="18.50" textLength="47.02" lengthAdjust="spacingAndGlyphs" fill="#ffffff" >-20.0</text>
<text x="1299.38" y="614.88" font-size="18.50" textLength="47.02" lengthAdjust="spacingAndGlyphs" fill="#ffffff" >-30.0</text>
<text x="1299.38" y="685.72" font-size="18.50" textLength="47.02" lengthAdjust="spacingAndGlyphs" fill="#ffffff" >-40.0</text>
<text x="1299.38" y="756.56" font-size="18.50" textLength="47.02" lengthAdjust="spacingAndGlyphs" fill="#ffffff" >-50.0</text>
<text x="1299.38" y="827.40" font-size="18.50" textLength="47.02" lengthAdjust="spacingAndGlyphs" fill="#ffffff" >-60.0</text>
<text x="1367.47" y="840.90" font-size="15.00" textLength="21.65" lengthAdjust="spacingAndGlyphs" fill="#ffffff" >-60</text>
<text x="1399.89" y="860.70" font-size="15.00" textLength="21.65" lengthAdjust="spacingAndGlyphs" fill="#ffffff" >-40</text>
<text x="1432.31" y="840.90" font-size="15.00" textLength="21.65" lengthAdjust="spacingAndGlyphs" fill="#ffffff" >-20</text>
<text x="1471.24" y="860.70" font-size="15.00" textLength="8.73" lengthAdjust="spacingAndGlyphs" fill="#ffffff" >0</text>
<text x="1499.34" y="840.90" font-size="15.00" textLength="17.18" lengthAdjust="spacingAndGlyphs" fill="#ffffff" >20</text>
<text x="1532.19" y="860.70" font-size="15.00" textLength="16.73" lengthAdjust="spacingAndGlyphs" fill="#ffffff" >40</text>
<text x="1564.18" y="840.90" font-size="15.00" textLength="17.19" lengthAdjust="spacingAndGlyphs" fill="#ffffff" >60</text>
<text x="1596.71" y="860.70" font-size="15.00" textLength="17.07" lengthAdjust="spacingAndGlyphs" fill="#ffffff" >80</text>
<text x="1625.57" y="840.90" font-size="15.00" textLength="23.74" lengthAdjust="spacingAndGlyphs" fill="#ffffff" >100</text>
<text x="1657.99" y="860.70" font-size="15.00" textLength="23.74" lengthAdjust="spacingAndGlyphs" fill="#ffffff" >120</text>
<text x="1690.41" y="840.90" font-size="15.00" textLength="23.74" lengthAdjust="spacingAndGlyphs" fill="#ffffff" >140</text>
<text x="1722.83" y="860.70" font-size="15.00" textLength="23.74" lengthAdjust="spacingAndGlyphs" fill="#ffffff" >160</text>
<text x="1755.25" y="840.90" font-size="15.00" textLength="23.74" lengthAdjust="spacingAndGlyphs" fill="#ffffff" >180</text>
<text x="1787.30" y="860.70" font-size="15.00" textLength="24.83" lengthAdjust="spacingAndGlyphs" fill="#ffffff" >200</text>
<text x="1819.72" y="840.90" font-size="15.00" textLength="24.83" lengthAdjust="spacingAndGlyphs" fill="#ffffff" >220</text>
<text x="1487.14" y="888.40" font-size="20.49" textLength="222.11" lengthAdjust="spacingAndGlyphs" fill="#ffffff" >Distance Difference (km)</text>
<g transform="translate(1276,709.8) rotate(-90)">
<text x="-1.64" y="0.00" font-size="22.50" textLength="136.88" lengthAdjust="spacingAndGlyphs" fill="#ffffff" >Magnitude (dB)</text>
</g>
</svg>
</body></html>
